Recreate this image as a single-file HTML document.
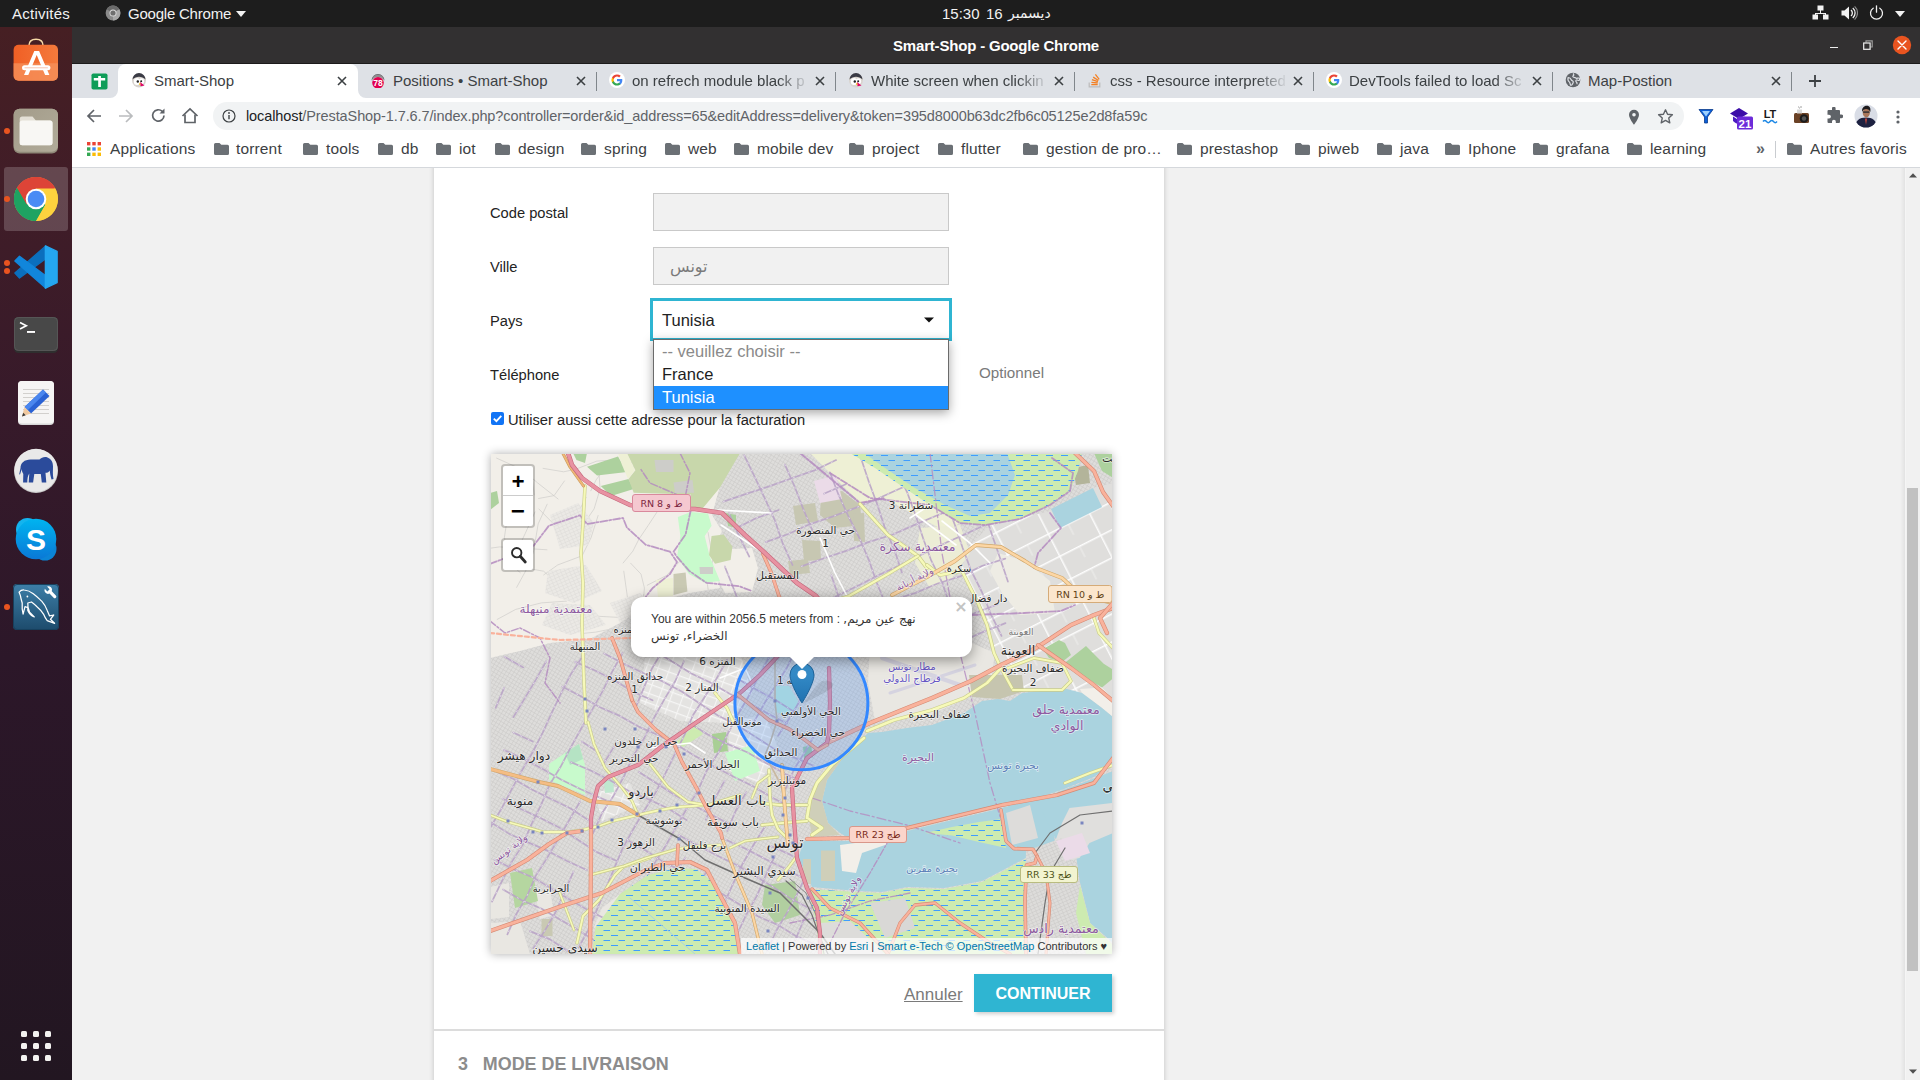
<!DOCTYPE html>
<html lang="fr">
<head>
<meta charset="utf-8">
<title>Smart-Shop - Google Chrome</title>
<style>
*{box-sizing:border-box;margin:0;padding:0}
html,body{width:1920px;height:1080px;overflow:hidden;background:#f1f1f1}
body{position:relative;font-family:"Liberation Sans","DejaVu Sans",sans-serif;color:#232323;-webkit-font-smoothing:antialiased}
.abs{position:absolute}
.ar{font-family:"DejaVu Sans","Liberation Sans",sans-serif}
/* GNOME top bar */
#topbar{position:absolute;left:0;top:0;width:1920px;height:27px;background:#1d1d1d;color:#f2f2f2;font-size:15px}
#topbar span{position:absolute;top:0;line-height:27px;white-space:nowrap}
/* dock */
#dock{position:absolute;left:0;top:27px;width:72px;height:1053px;background:linear-gradient(180deg,#461f23 0%,#411d27 14%,#371a2a 36%,#2c1729 60%,#221621 100%)}
/* chrome window */
#titlebar{position:absolute;left:72px;top:27px;width:1848px;height:37px;background:#323031;border-bottom:1px solid #1c1b1b;color:#fff;font-weight:bold;font-size:15px}
#tabstrip{position:absolute;left:72px;top:64px;width:1848px;height:34px;background:#dee1e6}
#toolbar{position:absolute;left:72px;top:98px;width:1848px;height:37px;background:#fff}
#bookmarks{position:absolute;left:72px;top:135px;width:1848px;height:33px;background:#fff;border-bottom:1px solid #d5d8dc}
.tab{position:absolute;top:0;height:33px;width:240px;font-size:15px;color:#3c4043}
.tab .t{position:absolute;left:36px;top:0;line-height:33px;white-space:nowrap;overflow:hidden;width:178px}
.tab .x{position:absolute;left:217px;top:10px;width:14px;height:14px}
.tab .fav{position:absolute;left:13px;top:8px;width:16px;height:16px}
.tsep{position:absolute;top:8px;width:1px;height:19px;background:#80868b}
.bm{position:absolute;top:0;line-height:28px;font-size:15.500px;letter-spacing:.15px;color:#3c4043;white-space:nowrap}
.bf{position:absolute;top:8px;width:15px;height:12px}
/* page */
#page{position:absolute;left:72px;top:168px;width:1833px;height:912px;background:#f1f1f1;overflow:hidden}
#card{position:absolute;left:362px;top:-10px;width:730px;height:940px;background:#fff;box-shadow:0 0 5px rgba(0,0,0,.2)}
.lbl{position:absolute;left:490px;font-size:14.700px;color:#232323;white-space:nowrap;line-height:20px}
.inp{position:absolute;left:653px;width:296px;height:38px;background:#f1f1f1;border:1px solid #c9c9c9}
</style>
</head>
<body>
<div id="topbar">
  <span style="left:12px;letter-spacing:.25px">Activités</span>
  <svg class="abs" style="left:105px;top:5px" width="16" height="16" viewBox="0 0 16 16"><circle cx="8" cy="8" r="7.400" fill="#8a8a8a"/><path d="M8 8 L1.600 4.300 A7.400 7.400 0 0 1 14.400 4.300 Z" fill="#6a6a6a"/><path d="M8 8 L14.400 4.300 A7.400 7.400 0 0 1 8 15.400 Z" fill="#a8a8a8"/><circle cx="8" cy="8" r="3.500" fill="#dcdcdc"/><circle cx="8" cy="8" r="2.600" fill="#6f6f6f"/></svg>
  <span style="left:128px;letter-spacing:-.22px">Google Chrome</span>
  <svg class="abs" style="left:236px;top:11px" width="10" height="6" viewBox="0 0 10 6"><path d="M0 0h10L5 6z" fill="#f2f2f2"/></svg>
  <span style="left:942px">15:30</span>
  <span style="left:986px">16</span>
  <span class="ar" style="left:1008px;font-size:14px">ديسمبر</span>
  <!-- network -->
  <svg class="abs" style="left:1812px;top:5px" width="17" height="16" viewBox="0 0 17 16" fill="#f2f2f2"><rect x="5.5" y="0.5" width="6" height="5"/><rect x="0.5" y="9.5" width="5.5" height="5"/><rect x="11" y="9.5" width="5.5" height="5"/><path d="M8 5h1v3h5v2h-1V9H4v1H3V8h5z"/></svg>
  <!-- volume -->
  <svg class="abs" style="left:1841px;top:5px" width="17" height="16" viewBox="0 0 17 16"><path d="M0.5 5.5h3L8 1.5v13L3.5 10.5h-3z" fill="#f2f2f2"/><path d="M10 5a4 4 0 0 1 0 6M11.8 3a6.6 6.6 0 0 1 0 10" stroke="#f2f2f2" stroke-width="1.3" fill="none"/><path d="M13.6 1.4a9 9 0 0 1 0 13.2" stroke="#8a8a8a" stroke-width="1.2" fill="none"/></svg>
  <!-- power -->
  <svg class="abs" style="left:1868px;top:5px" width="17" height="16" viewBox="0 0 17 16"><path d="M5.2 3.2a6 6 0 1 0 6.6 0" stroke="#f2f2f2" stroke-width="1.3" fill="none" stroke-linecap="round"/><path d="M8.5 0.8v6.4" stroke="#f2f2f2" stroke-width="1.3" stroke-linecap="round"/></svg>
  <svg class="abs" style="left:1895px;top:11px" width="10" height="6" viewBox="0 0 10 6"><path d="M0 0h10L5 6z" fill="#f2f2f2"/></svg>
</div>
<div id="dock">
  <!-- coordinates inside dock: y = screenY-27 -->
  <!-- running dots -->
  <!-- App store -->
  <svg class="abs" style="left:12px;top:8px" width="48" height="50" viewBox="0 0 48 50">
    <defs><linearGradient id="gA" x1="0" y1="0" x2="1" y2="0"><stop offset="0" stop-color="#f05f25"/><stop offset="1" stop-color="#f47a3c"/></linearGradient></defs>
    <path d="M17 12V10.500c0-4 2.700-6.300 7-6.300s7 2.300 7 6.300V12" stroke="#f5d9a6" stroke-width="1.500" fill="none"/>
    <rect x="1.600" y="9.800" width="44.400" height="36" rx="5" fill="url(#gA)"/>
    <path d="M1.600 28.300H46V40.800a5 5 0 0 1-5 5H6.600a5 5 0 0 1-5-5z" fill="#f6915c" opacity=".75"/>
    <path d="M12 40 L22.300 16h4.800L37.400 40h-4.300L24.700 20 16.300 40z" fill="#fff"/>
    <rect x="10" y="30.300" width="28.400" height="5" rx="2.500" fill="#fff"/>
    <path d="M12.500 32.800h23.400" stroke="#f7c0a8" stroke-width=".9"/>
  </svg>
  <!-- Files -->
  <svg class="abs" style="left:12px;top:80px" width="48" height="48" viewBox="0 0 48 48">
    <defs><linearGradient id="gF" x1="0" y1="0" x2="1" y2="1"><stop offset="0" stop-color="#a39c8a"/><stop offset="1" stop-color="#b1ab99"/></linearGradient></defs>
    <rect x="1.600" y="1.700" width="44.400" height="44.800" rx="6" fill="#8f8978"/>
    <rect x="1.600" y="1.700" width="44.400" height="43" rx="6" fill="url(#gF)"/>
    <path d="M7.700 12a2.500 2.500 0 0 1 2.500-2.500h10.300l3.400 4H38a2.500 2.500 0 0 1 2.500 2.500V35.800a2.500 2.500 0 0 1-2.500 2.500H10.200a2.500 2.500 0 0 1-2.500-2.500z" fill="#e4e0d6"/>
    <path d="M7.700 15.900a2.500 2.500 0 0 1 2.500-2.500H38a2.500 2.500 0 0 1 2.500 2.500V35.800a2.500 2.500 0 0 1-2.500 2.500H10.200a2.500 2.500 0 0 1-2.500-2.500z" fill="#f8f7f4"/>
  </svg>
  <!-- Chrome highlight + icon -->
  <div class="abs" style="left:4px;top:140px;width:64px;height:64px;border-radius:3px;background:rgba(255,255,255,.19)"></div>
  <svg class="abs" style="left:13px;top:149px" width="46" height="46" viewBox="0 0 46 46">
    <circle cx="23" cy="23" r="22" fill="#fdd23e"/>
    <path d="M23 23 L3.950 12 A22 22 0 0 1 42.050 12 Z" fill="#dd4437"/>
    <path d="M23 23 L3.950 12 A22 22 0 0 0 23 45 L32.500 28.500 Z" fill="#1ea362"/>
    <path d="M23 12.500 H42.300 A22 22 0 0 0 3.950 12 L13.500 28.500 Z" fill="#dd4437"/>
    <path d="M13.500 28.500 L3.950 12 A22 22 0 0 0 23 45 L32.200 28.900 Z" fill="#1ea362"/>
    <path d="M32.300 28.700 L23 45 A22 22 0 0 0 42.200 12.500 H23 Z" fill="#fdd23e"/>
    <circle cx="23" cy="23" r="10.300" fill="#fff"/>
    <circle cx="23" cy="23" r="8.300" fill="#4a8bf5"/>
  </svg>
  <!-- VS Code -->
  <svg class="abs" style="left:13px;top:217px" width="46" height="46" viewBox="0 0 46 46">
    <path d="M1.900 29.100 L6.500 34 L32.700 14.600 L32.700 1.900 Z" fill="#0b6fbd" stroke="#0b6fbd" stroke-width="1.400" stroke-linejoin="round"/>
    <path d="M6.500 12.200 L1.900 16.900 L32.700 44.100 L32.700 31.700 Z" fill="#1186db" stroke="#1186db" stroke-width="1.400" stroke-linejoin="round"/>
    <path d="M32.400 1.900 L44.100 7.400 V38.600 L32.400 44.100 Z" fill="#25a7f0" stroke="#25a7f0" stroke-width="1.400" stroke-linejoin="round"/>
  </svg>
  <!-- Terminal -->
  <svg class="abs" style="left:12px;top:288px" width="48" height="40" viewBox="0 0 48 40">
    <rect x="2" y="2" width="44" height="36" rx="4.500" fill="#2f2f2f"/>
    <rect x="2" y="2" width="44" height="34" rx="4.500" fill="#484848"/>
    <rect x="2.500" y="2.500" width="43" height="33" rx="4" fill="none" stroke="#5a5a5a" stroke-width=".8"/>
    <path d="M8 7.500l6.300 3.300L8 14.100" stroke="#fff" stroke-width="1.700" fill="none"/>
    <rect x="15" y="16" width="8" height="1.900" fill="#fff"/>
  </svg>
  <!-- Text editor -->
  <svg class="abs" style="left:16px;top:352px" width="40" height="48" viewBox="0 0 40 48">
    <rect x="2" y="2" width="36" height="44" rx="4" fill="#d8d8d8"/>
    <rect x="2" y="2" width="36" height="42.500" rx="4" fill="#f6f5f4"/>
    <g stroke="#d2d0cd" stroke-width="1"><path d="M7 10.500h26M7 14.500h26M7 18.500h26M7 22.500h26M7 26.500h26M7 30.500h26M7 34.500h26"/></g>
    <path d="M27 10.500 L33.500 17 L15 34.500 L8.500 28 Z" fill="#2a62d4"/>
    <path d="M27 10.500 L30 13.500 L11.700 31.200 L8.500 28 Z" fill="#4a86ee"/>
    <path d="M8.500 28 L15 34.500 L6 37.500 Z" fill="#f0c9a0"/>
    <path d="M6 37.500 L7.200 33.800 L9.700 36.300 Z" fill="#3a3a3a"/>
  </svg>
  <!-- Elephant (PostgreSQL-like, round) -->
  <svg class="abs" style="left:13px;top:421px" width="46" height="46" viewBox="0 0 46 46">
    <circle cx="23" cy="23" r="22" fill="#c9c9c9"/>
    <circle cx="23" cy="22.300" r="21.500" fill="#e9e9e9"/>
    <path d="M7.500 20c0-5 4-8.500 10-8.500h9c2-2 5-3 8-2 4 1.500 5.500 5 5.500 9 0 4-.5 8 .5 12.500l-2 .5c-1-3-1.500-6-1.800-9-.8 1.500-2.500 2.500-4.200 2.300l.8 9.700h-4.500l-1-8.500h-6.500l-1.200 8.500h-4.400l.6-9c-1.500 2-2 5-2 9h-4.200l.2-8.500c-1-1.500-1.500-3-1.500-5l-1.800 5.500-.8-.3z" fill="#2b4b9b"/>
  </svg>
  <!-- Skype -->
  <svg class="abs" style="left:13px;top:489px" width="46" height="46" viewBox="0 0 46 46">
    <defs><linearGradient id="gS" x1="0" y1="0" x2="0" y2="1"><stop offset="0" stop-color="#00b4f0"/><stop offset="1" stop-color="#0a78d6"/></linearGradient></defs>
    <circle cx="14.500" cy="13.500" r="11.500" fill="#14b4ee"/>
    <circle cx="32" cy="33" r="11.500" fill="#0b84d6"/>
    <circle cx="23" cy="23" r="20.300" fill="url(#gS)"/>
    <text x="23" y="33.800" font-family="Liberation Sans, sans-serif" font-weight="bold" font-size="30" fill="#fff" text-anchor="middle">S</text>
  </svg>
  <!-- MySQL workbench -->
  <svg class="abs" style="left:11px;top:555px" width="50" height="50" viewBox="0 0 50 50">
    <defs><linearGradient id="gM" x1="0" y1="0" x2="0" y2="1"><stop offset="0" stop-color="#3d7fa8"/><stop offset="1" stop-color="#1d4b6c"/></linearGradient></defs>
    <rect x="2" y="2" width="46" height="46" rx="4" fill="url(#gM)"/>
    <rect x="2.500" y="2.500" width="45" height="45" rx="3.500" fill="none" stroke="#17405d" stroke-width="1"/>
    <path d="M8.100 10.200C9.500 8.600 11.500 7.800 13.100 8c3.500 0.300 6.500 1.600 9.200 3.700 3.400 2.600 6 5.200 8.400 7.400 2.400 2.700 4.300 5.800 5.500 9.300l2.400 5.500 4.100-.9-3.300 4.300 4.200 4-7.400-2.700c-1.500-1.800-2.700-4-3.700-6.500-1.800-2.800-4-5.300-6.500-7.400-1.700-1.600-3.500-3.200-5.500-4.700l-3.700 1c-.3 3.200.4 6.300 1.800 9.200l4.700 4.700c-3-1-5.200-3.200-6.500-6.300v-3l-2.800-.9-1.900 7.400c-.9-3.500-1.200-7.200-.9-11.100C10.600 18.700 9.800 16.200 9.400 13.600z" fill="none" stroke="#fff" stroke-width="1.250" stroke-linejoin="round"/>
    <circle cx="16.400" cy="14.500" r=".9" fill="#fff"/>
    <g transform="translate(39.500 10.300) rotate(-45)"><path d="M-1.600 -6.500a3.600 3.600 0 0 0 0 6.700V6a1.600 1.600 0 0 0 3.200 0V.2a3.600 3.600 0 0 0 0-6.700v3.700h-3.200z" fill="#fff"/></g>
  </svg>
  <!-- apps grid -->
  <svg class="abs" style="left:20px;top:1003px" width="32" height="32" viewBox="0 0 32 32" fill="#f3f2f0">
    <rect x="1" y="1" width="6" height="6" rx="1.500"/><rect x="13" y="1" width="6" height="6" rx="1.500"/><rect x="25" y="1" width="6" height="6" rx="1.500"/>
    <rect x="1" y="13" width="6" height="6" rx="1.500"/><rect x="13" y="13" width="6" height="6" rx="1.500"/><rect x="25" y="13" width="6" height="6" rx="1.500"/>
    <rect x="1" y="25" width="6" height="6" rx="1.500"/><rect x="13" y="25" width="6" height="6" rx="1.500"/><rect x="25" y="25" width="6" height="6" rx="1.500"/>
  </svg>
  <div class="abs" style="left:4px;top:101px;width:6px;height:6px;border-radius:3px;background:#e95420"></div>
  <div class="abs" style="left:4px;top:169px;width:6px;height:6px;border-radius:3px;background:#e95420"></div>
  <div class="abs" style="left:4px;top:232.500px;width:6px;height:6px;border-radius:3px;background:#e95420"></div>
  <div class="abs" style="left:4px;top:241.300px;width:6px;height:6px;border-radius:3px;background:#e95420"></div>
  <div class="abs" style="left:4px;top:577px;width:6px;height:6px;border-radius:3px;background:#e95420"></div>
</div>
<div id="titlebar">
<span class="abs" style="left:0;top:0;width:1848px;text-align:center;line-height:37px;white-space:nowrap;letter-spacing:-.19px">Smart-Shop - Google Chrome</span>
<div class="abs" style="left:1758px;top:19.500px;width:8px;height:1.500px;background:#ededed"></div>
<svg class="abs" style="left:1791px;top:13px" width="10" height="10" viewBox="0 0 10 10" fill="none" stroke-width="1.200"><path d="M3 2.500V.8h6.200V7H7.500" stroke="#9a9a9a"/><rect x=".7" y="3" width="6.400" height="6.300" stroke="#f0f0f0"/></svg>
<svg class="abs" style="left:1820px;top:8px" width="20" height="20" viewBox="0 0 20 20"><circle cx="10" cy="10" r="9.200" fill="#e95420"/><path d="M6 6l8 8M14 6l-8 8" stroke="#fff" stroke-width="1.400" stroke-linecap="round"/></svg>
</div>
<div id="tabstrip">
<svg class="abs" style="left:18.500px;top:8.500px" width="17" height="17" viewBox="0 0 17 17"><rect x=".5" y=".5" width="16" height="16" rx="1.800" fill="#0f9d58"/><path d="M7.200 3h2.700v11H7.200z M2.800 5h11.400v2.600H2.800z" fill="#fff"/></svg>
<div class="abs" style="left:46px;top:0;width:240px;height:34px;background:#fff;border-radius:8px 8px 0 0"></div>
<svg class="abs" style="left:38px;top:26px" width="8" height="8" viewBox="0 0 8 8"><path d="M8 0v8H0a8 8 0 0 0 8-8z" fill="#fff"/></svg>
<svg class="abs" style="left:286px;top:26px" width="8" height="8" viewBox="0 0 8 8"><path d="M0 0v8h8a8 8 0 0 1-8-8z" fill="#fff"/></svg>
<div class="tab" style="left:46px"><svg class="fav" viewBox="0 0 16 16"><circle cx="8" cy="8.500" r="7" fill="#d9d4cf"/><path d="M1.500 7.500a6.500 6.500 0 0 1 13 0c-2-2-4-2.800-6.500-2.800S3.500 5.500 1.500 7.500z" fill="#3a3b45"/><ellipse cx="6" cy="9.500" rx="3.200" ry="3.600" fill="#fff"/><ellipse cx="10.500" cy="9.300" rx="2.600" ry="3" fill="#fff"/><circle cx="6.800" cy="9.500" r="1.200" fill="#222"/><circle cx="10.200" cy="9.300" r="1" fill="#222"/><path d="M9 10l4.500 3.500-4 .8z" fill="#df0067"/><path d="M8.500 10.500l1.500 2-2 .5z" fill="#f9c21b"/></svg><span class="t">Smart-Shop</span><svg class="x" viewBox="0 0 14 14"><path d="M3 3l8 8M11 3l-8 8" stroke="#3c4043" stroke-width="1.600"/></svg></div>
<div class="tab" style="left:285px"><svg class="fav" viewBox="0 0 16 16"><path d="M1.500 8.500a6.500 6.500 0 0 1 13 0c-2-2.500-4-3.500-6.500-3.500S3.500 6 1.500 8.500z" fill="#55555c"/><circle cx="8" cy="8.500" r="6" fill="#c9c5c1" opacity=".5"/><circle cx="8" cy="10.800" r="5.800" fill="#e2004f"/><text x="8" y="14" font-size="8.500" font-weight="bold" fill="#fff" text-anchor="middle" font-family="Liberation Sans, sans-serif">78</text></svg><span class="t">Positions • Smart-Shop</span><svg class="x" viewBox="0 0 14 14"><path d="M3 3l8 8M11 3l-8 8" stroke="#3c4043" stroke-width="1.600"/></svg></div>
<div class="tab" style="left:524px"><svg class="fav" viewBox="0 0 16 16"><circle cx="8" cy="8" r="8" fill="#fff"/><path d="M13.300 8.150c0-.4-.04-.8-.1-1.150H8v2.200h3a2.600 2.600 0 0 1-1.100 1.700v1.400h1.800c1.050-.97 1.600-2.400 1.600-4.150z" fill="#4285f4"/><path d="M8 13.600c1.500 0 2.750-.5 3.700-1.350l-1.800-1.400c-.5.330-1.130.53-1.900.53-1.450 0-2.700-.98-3.130-2.300H3v1.450A5.600 5.600 0 0 0 8 13.600z" fill="#34a853"/><path d="M4.870 9.080a3.360 3.360 0 0 1 0-2.160V5.470H3a5.600 5.600 0 0 0 0 5.060z" fill="#fbbc05"/><path d="M8 4.620c.82 0 1.550.28 2.130.83l1.600-1.600A5.400 5.400 0 0 0 8 2.400a5.600 5.600 0 0 0-5 3.070l1.870 1.450C5.300 5.600 6.550 4.620 8 4.620z" fill="#ea4335"/></svg><span class="t" style="-webkit-mask-image:linear-gradient(90deg,#000 82%,transparent 100%);mask-image:linear-gradient(90deg,#000 82%,transparent 100%)">on refrech module black p</span><svg class="x" viewBox="0 0 14 14"><path d="M3 3l8 8M11 3l-8 8" stroke="#3c4043" stroke-width="1.600"/></svg></div>
<div class="tab" style="left:763px"><svg class="fav" viewBox="0 0 16 16"><circle cx="8" cy="8.500" r="7" fill="#d9d4cf"/><path d="M1.500 7.500a6.500 6.500 0 0 1 13 0c-2-2-4-2.800-6.500-2.800S3.500 5.500 1.500 7.500z" fill="#3a3b45"/><ellipse cx="6" cy="9.500" rx="3.200" ry="3.600" fill="#fff"/><ellipse cx="10.500" cy="9.300" rx="2.600" ry="3" fill="#fff"/><circle cx="6.800" cy="9.500" r="1.200" fill="#222"/><circle cx="10.200" cy="9.300" r="1" fill="#222"/><path d="M9 10l4.500 3.500-4 .8z" fill="#df0067"/><path d="M8.500 10.500l1.500 2-2 .5z" fill="#f9c21b"/></svg><span class="t" style="-webkit-mask-image:linear-gradient(90deg,#000 82%,transparent 100%);mask-image:linear-gradient(90deg,#000 82%,transparent 100%)">White screen when clickin</span><svg class="x" viewBox="0 0 14 14"><path d="M3 3l8 8M11 3l-8 8" stroke="#3c4043" stroke-width="1.600"/></svg></div>
<div class="tab" style="left:1002px"><svg class="fav" viewBox="0 0 16 16"><path d="M2.200 10.500v4.300h10.600v-4.300" fill="none" stroke="#bcbbbb" stroke-width="1.200"/><path d="M4.300 12.700h6.400M4.400 10.300l6.300.7M4.900 7.700l6 1.900M6.200 5.100l5.200 3.400M8.400 2.400l3.800 5" stroke="#f48024" stroke-width="1.300"/></svg><span class="t" style="-webkit-mask-image:linear-gradient(90deg,#000 82%,transparent 100%);mask-image:linear-gradient(90deg,#000 82%,transparent 100%)">css - Resource interpreted</span><svg class="x" viewBox="0 0 14 14"><path d="M3 3l8 8M11 3l-8 8" stroke="#3c4043" stroke-width="1.600"/></svg></div>
<div class="tab" style="left:1241px"><svg class="fav" viewBox="0 0 16 16"><circle cx="8" cy="8" r="8" fill="#fff"/><path d="M13.300 8.150c0-.4-.04-.8-.1-1.150H8v2.200h3a2.600 2.600 0 0 1-1.100 1.700v1.400h1.800c1.050-.97 1.600-2.400 1.600-4.150z" fill="#4285f4"/><path d="M8 13.600c1.500 0 2.750-.5 3.700-1.350l-1.800-1.400c-.5.330-1.130.53-1.900.53-1.450 0-2.700-.98-3.130-2.300H3v1.450A5.600 5.600 0 0 0 8 13.600z" fill="#34a853"/><path d="M4.870 9.080a3.360 3.360 0 0 1 0-2.160V5.470H3a5.600 5.600 0 0 0 0 5.060z" fill="#fbbc05"/><path d="M8 4.620c.82 0 1.550.28 2.130.83l1.600-1.600A5.400 5.400 0 0 0 8 2.400a5.600 5.600 0 0 0-5 3.070l1.870 1.450C5.300 5.600 6.550 4.620 8 4.620z" fill="#ea4335"/></svg><span class="t" style="-webkit-mask-image:linear-gradient(90deg,#000 82%,transparent 100%);mask-image:linear-gradient(90deg,#000 82%,transparent 100%)">DevTools failed to load Sc</span><svg class="x" viewBox="0 0 14 14"><path d="M3 3l8 8M11 3l-8 8" stroke="#3c4043" stroke-width="1.600"/></svg></div>
<div class="tab" style="left:1480px"><svg class="fav" viewBox="0 0 16 16"><circle cx="8" cy="8" r="7.300" fill="#5f6368"/><path d="M3.200 5.500c1.500.2 2.500 1 3 2.200.4 1 1.500 1 2 1.800.5.900-.3 2-1 3-.6.900-1.500 1-1.800.2-.4-1-.3-2-1.200-2.800C3 8.800 2.500 7.500 3.200 5.500zM8 1.500c1 .8 1 1.800.2 2.300-.8.600-.2 1.500.8 1.500 1.200 0 1.500 1 2.600 1 .9 0 1.500-.6 2.600-.2.500 1 .4 2.300-.2 2.400-1 .2-1.600-.9-2.600-.5-1 .4-.6 1.600.2 2.200.6.500.6 1.300.2 2" fill="none" stroke="#dee1e6" stroke-width="1.200"/></svg><span class="t">Map-Postion</span><svg class="x" viewBox="0 0 14 14"><path d="M3 3l8 8M11 3l-8 8" stroke="#3c4043" stroke-width="1.600"/></svg></div>
<div class="tsep" style="left:524px"></div>
<div class="tsep" style="left:763px"></div>
<div class="tsep" style="left:1002px"></div>
<div class="tsep" style="left:1241px"></div>
<div class="tsep" style="left:1480px"></div>
<div class="tsep" style="left:1719px"></div>
<svg class="abs" style="left:1736px;top:10px" width="14" height="14" viewBox="0 0 14 14"><path d="M7 1v12M1 7h12" stroke="#3c4043" stroke-width="1.800"/></svg>
</div>
<div id="toolbar">
<svg class="abs" style="left:14px;top:10px" width="16" height="16" viewBox="0 0 16 16" fill="none" stroke="#5f6368" stroke-width="1.700"><path d="M15 8H2.500M8 2L2 8l6 6"/></svg>
<svg class="abs" style="left:46px;top:10px" width="16" height="16" viewBox="0 0 16 16" fill="none" stroke="#babcbe" stroke-width="1.700"><path d="M1 8h12.500M8 2l6 6-6 6"/></svg>
<svg class="abs" style="left:78px;top:9px" width="17" height="17" viewBox="0 0 17 17" fill="none" stroke="#5f6368" stroke-width="1.700"><path d="M14 8.500A5.700 5.700 0 1 1 12.300 4.400"/><path d="M14.500 1.500v5h-5z" fill="#5f6368" stroke="none"/></svg>
<svg class="abs" style="left:109px;top:9px" width="18" height="17" viewBox="0 0 18 17" fill="none" stroke="#5f6368" stroke-width="1.700"><path d="M1.500 9L9 2l7.500 7"/><path d="M4 7.500V15.500h10V7.500"/></svg>
<div class="abs" style="left:141px;top:4px;width:1471px;height:28px;border-radius:14px;background:#f1f3f4"></div>
<svg class="abs" style="left:150px;top:11px" width="14" height="14" viewBox="0 0 14 14"><circle cx="7" cy="7" r="6" fill="none" stroke="#3c4043" stroke-width="1.200"/><path d="M7 6v4.200" stroke="#3c4043" stroke-width="1.400"/><circle cx="7" cy="4" r=".9" fill="#3c4043"/></svg>
<span class="abs" style="left:174px;top:4px;line-height:28px;font-size:14.500px;color:#5f6368;white-space:nowrap;letter-spacing:-.1px"><span style="color:#202124">localhost</span>/PrestaShop-1.7.6.7/index.php?controller=order&amp;id_address=65&amp;editAddress=delivery&amp;token=395d8000b63dc2fb6c05125e2d8fa59c</span>
<svg class="abs" style="left:1556px;top:10.5px" width="12" height="17" viewBox="0 0 12 17"><path d="M6 .8A5 5 0 0 0 1 5.800C1 9.500 6 15.800 6 15.800s5-6.300 5-10A5 5 0 0 0 6 .8z" fill="#5f6368"/><circle cx="6" cy="5.800" r="1.800" fill="#f1f3f4"/></svg>
<svg class="abs" style="left:1585px;top:10px" width="17" height="17" viewBox="0 0 17 17"><path d="M8.500 1.800l2.050 4.500 4.850.5-3.650 3.250 1.050 4.800L8.500 12.350 4.200 14.850l1.050-4.800L1.600 6.800l4.850-.5z" fill="none" stroke="#5f6368" stroke-width="1.400" stroke-linejoin="round"/></svg>
<svg class="abs" style="left:1625px;top:9px" width="18" height="18" viewBox="0 0 18 18"><path d="M2 2.500h14L10.500 10v6h-3v-6z" fill="#0b5fd8"/><path d="M5 4h8L9 9.500z" fill="#9cd0ff"/><path d="M2 2.500h14L10.500 10v6h-3v-6z" fill="none" stroke="#0a3a8a" stroke-width=".8"/></svg>
<svg class="abs" style="left:1657px;top:7px" width="26" height="26" viewBox="0 0 26 26"><path d="M1 8.500L10 3l9 5.500-9 5.500z" fill="#3c0ea8"/><path d="M4 11.500v4.500c2 2 4 3 6 3s4-1 6-3v-4.500l-6 3.700z" fill="#4a1bc2"/><rect x="8" y="11.500" width="16" height="13" rx="1.500" fill="#6c2bd9"/><text x="16" y="22.500" font-size="11.500" font-weight="bold" fill="#fff" text-anchor="middle" font-family="Liberation Sans, sans-serif">21</text></svg>
<svg class="abs" style="left:1688px;top:8px" width="20" height="20" viewBox="0 0 20 20"><text x="10" y="11.500" font-size="11" font-weight="bold" fill="#1b1b1b" text-anchor="middle" font-family="Liberation Sans, sans-serif">LT</text><path d="M3 15.500c1.200-1.500 2.300-1.500 3.500 0s2.300 1.500 3.500 0 2.300-1.500 3.500 0 2.300 1.500 3.500 0" fill="none" stroke="#1e88e5" stroke-width="1.500"/></svg>
<svg class="abs" style="left:1719px;top:8px" width="22" height="20" viewBox="0 0 22 20"><rect x="3" y="7" width="15" height="10" rx="1.500" fill="#6b4226"/><rect x="6" y="3.500" width="5" height="4" fill="#d8d8d8"/><circle cx="13" cy="12.500" r="4.300" fill="#1c1c1c"/><circle cx="13" cy="12.500" r="2.200" fill="#555"/><path d="M7.500 .5l1 2M10 0v2" stroke="#888" stroke-width=".8"/></svg>
<svg class="abs" style="left:1753px;top:9px" width="18" height="18" viewBox="0 0 18 18"><path d="M7 1.500a1.800 1.800 0 0 1 3.600 0V3H14a1 1 0 0 1 1 1v3.400h1.300a1.900 1.900 0 0 1 0 3.800H15V15a1 1 0 0 1-1 1h-3.200v-1.400a1.900 1.900 0 0 0-3.800 0V16H3.500a1 1 0 0 1-1-1v-3.500H4a1.900 1.900 0 0 0 0-3.800H2.500V4a1 1 0 0 1 1-1H7z" fill="#5f6368"/></svg>
<svg class="abs" style="left:1782px;top:6px" width="24" height="24" viewBox="0 0 24 24"><defs><clipPath id="av"><circle cx="12" cy="12" r="11.500"/></clipPath></defs><circle cx="12" cy="12" r="11.500" fill="#d9dde6"/><g clip-path="url(#av)"><path d="M1 24c0-7.500 4.500-10.500 11-10.500s11 3 11 10.500z" fill="#1d2140"/><path d="M10.800 14.500l1.200 6.500 1.200-6.500z" fill="#b5443c"/><ellipse cx="12.300" cy="8.800" rx="3.600" ry="4.600" fill="#a9765a"/><path d="M8 8c-.3-4 1.800-6.300 4.800-6.300S17 4 16.300 8c-.8-2-2.300-3-4.200-3S8.800 6 8 8z" fill="#1c1a1d"/><rect x="9" y="7.300" width="6.500" height="1.600" rx=".6" fill="#2a2a30" opacity=".8"/></g></svg>
<svg class="abs" style="left:1824px;top:11.5px" width="4" height="14" viewBox="0 0 4 14" fill="#5f6368"><circle cx="2" cy="2" r="1.600"/><circle cx="2" cy="7" r="1.600"/><circle cx="2" cy="12" r="1.600"/></svg>
</div>
<div id="bookmarks">
<svg class="abs" style="left:15px;top:7px" width="14" height="14" viewBox="0 0 14 14"><g><rect x="0" y="0" width="3.400" height="3.400" fill="#ea4335"/><rect x="5.300" y="0" width="3.400" height="3.400" fill="#ea4335"/><rect x="10.600" y="0" width="3.400" height="3.400" fill="#ea4335"/><rect x="0" y="5.300" width="3.400" height="3.400" fill="#34a853"/><rect x="5.300" y="5.300" width="3.400" height="3.400" fill="#4285f4"/><rect x="10.600" y="5.300" width="3.400" height="3.400" fill="#fbbc05"/><rect x="0" y="10.600" width="3.400" height="3.400" fill="#34a853"/><rect x="5.300" y="10.600" width="3.400" height="3.400" fill="#fbbc05"/><rect x="10.600" y="10.600" width="3.400" height="3.400" fill="#fbbc05"/></g></svg>
<span class="bm" style="left:38px">Applications</span>
<svg class="bf" style="left:142px" viewBox="0 0 15 12"><path d="M0 1.500A1.500 1.500 0 0 1 1.500 0H5.500l1.800 1.800H13.500A1.500 1.500 0 0 1 15 3.300v7.200a1.500 1.500 0 0 1-1.500 1.500h-12A1.500 1.500 0 0 1 0 10.500z" fill="#6b7075"/></svg>
<span class="bm" style="left:164px">torrent</span>
<svg class="bf" style="left:231px" viewBox="0 0 15 12"><path d="M0 1.500A1.500 1.500 0 0 1 1.500 0H5.500l1.800 1.800H13.500A1.500 1.500 0 0 1 15 3.300v7.200a1.500 1.500 0 0 1-1.500 1.500h-12A1.500 1.500 0 0 1 0 10.500z" fill="#6b7075"/></svg>
<span class="bm" style="left:254px">tools</span>
<svg class="bf" style="left:306px" viewBox="0 0 15 12"><path d="M0 1.500A1.500 1.500 0 0 1 1.500 0H5.500l1.800 1.800H13.500A1.500 1.500 0 0 1 15 3.300v7.200a1.500 1.500 0 0 1-1.500 1.500h-12A1.500 1.500 0 0 1 0 10.500z" fill="#6b7075"/></svg>
<span class="bm" style="left:329px">db</span>
<svg class="bf" style="left:364px" viewBox="0 0 15 12"><path d="M0 1.500A1.500 1.500 0 0 1 1.500 0H5.500l1.800 1.800H13.500A1.500 1.500 0 0 1 15 3.300v7.200a1.500 1.500 0 0 1-1.500 1.500h-12A1.500 1.500 0 0 1 0 10.500z" fill="#6b7075"/></svg>
<span class="bm" style="left:387px">iot</span>
<svg class="bf" style="left:423px" viewBox="0 0 15 12"><path d="M0 1.500A1.500 1.500 0 0 1 1.500 0H5.500l1.800 1.800H13.500A1.500 1.500 0 0 1 15 3.300v7.200a1.500 1.500 0 0 1-1.500 1.500h-12A1.500 1.500 0 0 1 0 10.500z" fill="#6b7075"/></svg>
<span class="bm" style="left:446px">design</span>
<svg class="bf" style="left:509px" viewBox="0 0 15 12"><path d="M0 1.500A1.500 1.500 0 0 1 1.500 0H5.500l1.800 1.800H13.500A1.500 1.500 0 0 1 15 3.300v7.200a1.500 1.500 0 0 1-1.500 1.500h-12A1.500 1.500 0 0 1 0 10.500z" fill="#6b7075"/></svg>
<span class="bm" style="left:532px">spring</span>
<svg class="bf" style="left:593px" viewBox="0 0 15 12"><path d="M0 1.500A1.500 1.500 0 0 1 1.500 0H5.500l1.800 1.800H13.500A1.500 1.500 0 0 1 15 3.300v7.200a1.500 1.500 0 0 1-1.500 1.500h-12A1.500 1.500 0 0 1 0 10.500z" fill="#6b7075"/></svg>
<span class="bm" style="left:616px">web</span>
<svg class="bf" style="left:662px" viewBox="0 0 15 12"><path d="M0 1.500A1.500 1.500 0 0 1 1.500 0H5.500l1.800 1.800H13.500A1.500 1.500 0 0 1 15 3.300v7.200a1.500 1.500 0 0 1-1.500 1.500h-12A1.500 1.500 0 0 1 0 10.500z" fill="#6b7075"/></svg>
<span class="bm" style="left:685px">mobile dev</span>
<svg class="bf" style="left:777px" viewBox="0 0 15 12"><path d="M0 1.500A1.500 1.500 0 0 1 1.500 0H5.500l1.800 1.800H13.500A1.500 1.500 0 0 1 15 3.300v7.200a1.500 1.500 0 0 1-1.500 1.500h-12A1.500 1.500 0 0 1 0 10.500z" fill="#6b7075"/></svg>
<span class="bm" style="left:800px">project</span>
<svg class="bf" style="left:866px" viewBox="0 0 15 12"><path d="M0 1.500A1.500 1.500 0 0 1 1.500 0H5.500l1.800 1.800H13.500A1.500 1.500 0 0 1 15 3.300v7.200a1.500 1.500 0 0 1-1.500 1.500h-12A1.500 1.500 0 0 1 0 10.500z" fill="#6b7075"/></svg>
<span class="bm" style="left:889px">flutter</span>
<svg class="bf" style="left:951px" viewBox="0 0 15 12"><path d="M0 1.500A1.500 1.500 0 0 1 1.500 0H5.500l1.800 1.800H13.500A1.500 1.500 0 0 1 15 3.300v7.200a1.500 1.500 0 0 1-1.500 1.500h-12A1.500 1.500 0 0 1 0 10.500z" fill="#6b7075"/></svg>
<span class="bm" style="left:974px">gestion de pro…</span>
<svg class="bf" style="left:1105px" viewBox="0 0 15 12"><path d="M0 1.500A1.500 1.500 0 0 1 1.500 0H5.500l1.800 1.800H13.500A1.500 1.500 0 0 1 15 3.300v7.200a1.500 1.500 0 0 1-1.500 1.500h-12A1.500 1.500 0 0 1 0 10.500z" fill="#6b7075"/></svg>
<span class="bm" style="left:1128px">prestashop</span>
<svg class="bf" style="left:1223px" viewBox="0 0 15 12"><path d="M0 1.500A1.500 1.500 0 0 1 1.500 0H5.500l1.800 1.800H13.500A1.500 1.500 0 0 1 15 3.300v7.200a1.500 1.500 0 0 1-1.500 1.500h-12A1.500 1.500 0 0 1 0 10.500z" fill="#6b7075"/></svg>
<span class="bm" style="left:1246px">piweb</span>
<svg class="bf" style="left:1305px" viewBox="0 0 15 12"><path d="M0 1.500A1.500 1.500 0 0 1 1.500 0H5.500l1.800 1.800H13.500A1.500 1.500 0 0 1 15 3.300v7.200a1.500 1.500 0 0 1-1.500 1.500h-12A1.500 1.500 0 0 1 0 10.500z" fill="#6b7075"/></svg>
<span class="bm" style="left:1328px">java</span>
<svg class="bf" style="left:1373px" viewBox="0 0 15 12"><path d="M0 1.500A1.500 1.500 0 0 1 1.500 0H5.500l1.800 1.800H13.500A1.500 1.500 0 0 1 15 3.300v7.200a1.500 1.500 0 0 1-1.500 1.500h-12A1.500 1.500 0 0 1 0 10.500z" fill="#6b7075"/></svg>
<span class="bm" style="left:1396px">Iphone</span>
<svg class="bf" style="left:1461px" viewBox="0 0 15 12"><path d="M0 1.500A1.500 1.500 0 0 1 1.500 0H5.500l1.800 1.800H13.500A1.500 1.500 0 0 1 15 3.300v7.200a1.500 1.500 0 0 1-1.500 1.500h-12A1.500 1.500 0 0 1 0 10.500z" fill="#6b7075"/></svg>
<span class="bm" style="left:1484px">grafana</span>
<svg class="bf" style="left:1555px" viewBox="0 0 15 12"><path d="M0 1.500A1.500 1.500 0 0 1 1.500 0H5.500l1.800 1.800H13.500A1.500 1.500 0 0 1 15 3.300v7.200a1.500 1.500 0 0 1-1.500 1.500h-12A1.500 1.500 0 0 1 0 10.500z" fill="#6b7075"/></svg>
<span class="bm" style="left:1578px">learning</span>
<svg class="bf" style="left:1715px" viewBox="0 0 15 12"><path d="M0 1.500A1.500 1.500 0 0 1 1.500 0H5.500l1.800 1.800H13.500A1.500 1.500 0 0 1 15 3.300v7.200a1.500 1.500 0 0 1-1.500 1.500h-12A1.500 1.500 0 0 1 0 10.500z" fill="#6b7075"/></svg>
<span class="bm" style="left:1738px">Autres favoris</span>
<span class="bm" style="left:1684px;font-size:16px;font-weight:bold;color:#5f6368">»</span>
<div class="abs" style="left:1703px;top:6px;width:1px;height:17px;background:#c9ccd0"></div>
</div>
<div id="page">
<div id="card"></div>
</div>
<!-- form (absolute to screen) -->
<div class="lbl" style="top:203px">Code postal</div>
<div class="inp" style="top:193px"></div>
<div class="lbl" style="top:257px">Ville</div>
<div class="inp" style="top:247px"><span class="ar abs" style="left:16px;top:0;line-height:37px;font-size:16px;color:#7a7a7a" dir="rtl">تونس</span></div>
<div class="lbl" style="top:311px">Pays</div>
<div class="abs" style="left:650px;top:298px;width:302px;height:43px;border:3px solid #2fb5d2;background:#fff">
  <span class="abs" style="left:9px;top:.5px;line-height:37px;font-size:16.500px;color:#232323">Tunisia</span>
  <svg class="abs" style="left:271px;top:16px" width="10" height="6" viewBox="0 0 10 6"><path d="M0 .5h10L5 5.500z" fill="#111"/></svg>
</div>
<div class="lbl" style="top:365px">Téléphone</div>
<div class="abs" style="left:979px;top:363px;font-size:15.200px;line-height:20px;color:#7a7a7a">Optionnel</div>
<!-- dropdown -->
<div class="abs" style="left:653px;top:339px;width:296px;height:71px;background:#fff;border:1px solid #6b6b6b;box-shadow:0 3px 10px rgba(0,0,0,.35);font-size:16.500px">
  <div style="height:23px;line-height:23px;padding-left:8px;color:#8a8a8a">-- veuillez choisir --</div>
  <div style="height:23px;line-height:23px;padding-left:8px;color:#1d1d1d">France</div>
  <div style="height:23px;line-height:23px;padding-left:8px;color:#fff;background:#1e90ff">Tunisia</div>
</div>
<!-- checkbox -->
<svg class="abs" style="left:491px;top:412px" width="13" height="13" viewBox="0 0 13 13"><rect width="13" height="13" rx="2" fill="#1174f5"/><path d="M2.800 6.600l2.600 2.600 4.900-5.400" stroke="#fff" stroke-width="1.800" fill="none"/></svg>
<div class="lbl" style="left:508px;top:410px">Utiliser aussi cette adresse pour la facturation</div>
<!-- buttons -->
<div class="abs" style="left:904px;top:984px;font-size:17px;line-height:22px;color:#7a7a7a;text-decoration:underline">Annuler</div>
<div class="abs" style="left:974px;top:974px;width:138px;height:38px;background:#2fb5d2;box-shadow:2px 2px 4px rgba(0,0,0,.2);color:#fff;font-weight:bold;font-size:16px;line-height:39px;text-align:center">CONTINUER</div>
<div class="abs" style="left:434px;top:1029px;width:730px;height:2px;background:#dcdcdc"></div>
<div class="abs" style="left:458px;top:1052px;font-size:17.900px;line-height:24px;font-weight:bold;color:#8c8c8c;white-space:nowrap">3&nbsp;&nbsp;&nbsp;MODE DE LIVRAISON</div>
<!-- scrollbar -->
<div class="abs" style="left:1900px;top:168px;width:5px;height:912px;background:linear-gradient(90deg,rgba(0,0,0,0),rgba(0,0,0,.06))"></div>
<div class="abs" style="left:1905px;top:168px;width:15px;height:912px;background:#f1f1f1;border-left:1px solid #f5f5f5"></div>
<div class="abs" style="left:1907px;top:488px;width:11px;height:483px;background:#c1c1c1"></div>
<svg class="abs" style="left:1909px;top:173px" width="8" height="5" viewBox="0 0 8 5"><path d="M0 4.500h8L4 .3z" fill="#505050"/></svg>
<svg class="abs" style="left:1909px;top:1069px" width="8" height="5" viewBox="0 0 8 5"><path d="M0 .5h8L4 4.700z" fill="#505050"/></svg>
<div id="map" class="abs" style="left:491px;top:454px;width:621px;height:500px;overflow:hidden;background:#f2efe9;box-shadow:0 0 9px rgba(0,0,0,.32)">
<svg class="abs" style="left:-1px;top:-1px" width="623" height="501" viewBox="0 0 623 501" font-family="DejaVu Sans, Liberation Sans, sans-serif">
<defs>
<pattern id="wet" width="15" height="10" patternUnits="userSpaceOnUse"><path d="M1 2.500h7M8.500 7.500h6.500" stroke="#3f9dff" stroke-width="1"/></pattern>
<pattern id="fine" width="3.500" height="3.500" patternUnits="userSpaceOnUse" patternTransform="rotate(31)"><path d="M0 .4h3.500M.4 0v3.500" stroke="#bab9b7" stroke-width=".55"/></pattern>
<pattern id="fine2" width="4" height="3.200" patternUnits="userSpaceOnUse" patternTransform="rotate(-24)"><path d="M0 .4h4M.4 0v3.200" stroke="#bebdbb" stroke-width=".55"/></pattern>
<pattern id="coarse" width="46" height="25" patternUnits="userSpaceOnUse" patternTransform="rotate(-27)"><path d="M0 .8h46M.8 0v25" stroke="#ffffff" stroke-width="1.400"/><path d="M23 .8v12" stroke="#f4f4f2" stroke-width=".8"/></pattern>
<pattern id="whitenet" width="11" height="9" patternUnits="userSpaceOnUse" patternTransform="rotate(20)"><path d="M0 .6h11M.6 0v9" stroke="#ffffff" stroke-width="1.100"/></pattern>
<clipPath id="urb"><polygon points="240,0 623,0 623,501 0,501 0,205 30,198 60,190 100,186 130,170 160,150 200,140 230,135 222,100 232,78 222,62 228,40"/></clipPath>
</defs>
<rect width="623" height="501" fill="#f2efe9"/>
<polyline points="74.4815,27.9071 64.1,42.6 48.6,45.5" fill="none" stroke="#cfcdca" stroke-width="0.7" stroke-linejoin="round" stroke-linecap="round" />
<polyline points="96.1796,44.5227 88.7,58.2 69.9,75.2" fill="none" stroke="#cfcdca" stroke-width="0.7" stroke-linejoin="round" stroke-linecap="round" />
<polyline points="91.2365,180.607 105.8,179.1 130.9,174.1" fill="none" stroke="#cfcdca" stroke-width="0.7" stroke-linejoin="round" stroke-linecap="round" />
<polyline points="133.768,118.199 137,141.1 140.2,166.8 145.7,185 152.9,207.9" fill="none" stroke="#cfcdca" stroke-width="0.7" stroke-linejoin="round" stroke-linecap="round" />
<polyline points="18.8267,55.5461 14.4,84.2 18.3,109.3 30.3,119.7" fill="none" stroke="#cfcdca" stroke-width="0.7" stroke-linejoin="round" stroke-linecap="round" />
<polyline points="153.69,141.446 153,162.4 147.9,175 145,188.1" fill="none" stroke="#cfcdca" stroke-width="0.7" stroke-linejoin="round" stroke-linecap="round" />
<polyline points="168.167,57.2774 158.1,72.6 148.9,86.2 142.9,98.1 133.1,110" fill="none" stroke="#cfcdca" stroke-width="0.7" stroke-linejoin="round" stroke-linecap="round" />
<polyline points="89.9184,161.213 106.8,163.2 128.6,164.4 148.2,175.6" fill="none" stroke="#cfcdca" stroke-width="0.7" stroke-linejoin="round" stroke-linecap="round" />
<polyline points="53.0728,15.3522 73.6,18.8 85.5,16.3 106.8,8.1 128.1,6.8" fill="none" stroke="#cfcdca" stroke-width="0.7" stroke-linejoin="round" stroke-linecap="round" />
<polyline points="155.526,9.98869 136.5,9.2 115.2,14.7 106.1,26.9 100.8,37.8" fill="none" stroke="#cfcdca" stroke-width="0.7" stroke-linejoin="round" stroke-linecap="round" />
<polyline points="34.7909,18.7709 47.5,29.8 68.1,46" fill="none" stroke="#cfcdca" stroke-width="0.7" stroke-linejoin="round" stroke-linecap="round" />
<polyline points="109.055,21.3404 110.1,35.9 104.1,55.9 94.5,69.9" fill="none" stroke="#cfcdca" stroke-width="0.7" stroke-linejoin="round" stroke-linecap="round" />
<polyline points="218.965,66.9242 205.3,81.4 194.3,101" fill="none" stroke="#cfcdca" stroke-width="0.7" stroke-linejoin="round" stroke-linecap="round" />
<polyline points="208.899,65.8038 218.1,79.6 222.9,106.6 217.4,131.3 220,149.6" fill="none" stroke="#cfcdca" stroke-width="0.7" stroke-linejoin="round" stroke-linecap="round" />
<polyline points="6.66543,5.16836 26.6,14.1 42.6,28.2 44.2,41.9" fill="none" stroke="#cfcdca" stroke-width="0.7" stroke-linejoin="round" stroke-linecap="round" />
<polyline points="108.118,62.4814 101,84.8 92.1,102.8 67.8,111.9 53.7,121.9" fill="none" stroke="#cfcdca" stroke-width="0.7" stroke-linejoin="round" stroke-linecap="round" />
<polyline points="76.479,148.152 51.3,149.9 25.7,156.4 7.2,166.4" fill="none" stroke="#cfcdca" stroke-width="0.7" stroke-linejoin="round" stroke-linecap="round" />
<polyline points="140.662,110.236 151,121.1 154.4,134.9 152,164.2" fill="none" stroke="#cfcdca" stroke-width="0.7" stroke-linejoin="round" stroke-linecap="round" />
<polyline points="44.8053,161.673 60.9,158.1 78.5,151.8" fill="none" stroke="#cfcdca" stroke-width="0.7" stroke-linejoin="round" stroke-linecap="round" />
<polyline points="209.304,65.45 204.1,91.5 194.9,102.8 176.7,122.4 157.3,132.2" fill="none" stroke="#cfcdca" stroke-width="0.7" stroke-linejoin="round" stroke-linecap="round" />
<polyline points="32.5586,114.534 53.6,118.2 65.7,129" fill="none" stroke="#cfcdca" stroke-width="0.7" stroke-linejoin="round" stroke-linecap="round" />
<polyline points="57.1537,51.2297 48.2,70.8 43.4,99.3 37.3,114.9 26.7,134.3" fill="none" stroke="#cfcdca" stroke-width="0.7" stroke-linejoin="round" stroke-linecap="round" />
<polyline points="56.9608,96.7938 29.1,95 9.6,93.9 -14.1,97.2" fill="none" stroke="#cfcdca" stroke-width="0.7" stroke-linejoin="round" stroke-linecap="round" />
<polyline points="48.9187,56.0143 63.4,70.7 75.2,82.5" fill="none" stroke="#cfcdca" stroke-width="0.7" stroke-linejoin="round" stroke-linecap="round" />
<polyline points="171.737,17.4132 145.4,14.1 124.4,11.5" fill="none" stroke="#cfcdca" stroke-width="0.7" stroke-linejoin="round" stroke-linecap="round" />
<polyline points="45.0213,58.9272 35.2,80.5 27.6,96.7" fill="none" stroke="#cfcdca" stroke-width="0.7" stroke-linejoin="round" stroke-linecap="round" />
<polygon points="60,62 88,50 104,70 98,92 70,96" fill="#ebe9e5" />
<polygon points="60,62 88,50 104,70 98,92 70,96" fill="url(#fine2)" opacity=".3"/>
<polygon points="58,118 96,112 112,138 84,150 55,140" fill="#ebe9e5" />
<polygon points="58,118 96,112 112,138 84,150 55,140" fill="url(#fine2)" opacity=".3"/>
<polygon points="62,150 100,152 116,172 80,182 52,172" fill="#ebe9e5" />
<polygon points="62,150 100,152 116,172 80,182 52,172" fill="url(#fine2)" opacity=".3"/>
<polygon points="120,150 150,140 160,150 130,170" fill="#ebe9e5" />
<polygon points="120,150 150,140 160,150 130,170" fill="url(#fine2)" opacity=".3"/>
<polygon points="240,0 623,0 623,501 0,501 0,205 30,198 60,190 100,186 130,170 160,150 200,140 230,135 222,100 232,78 222,62 228,40" fill="#dedddb" />
<polygon points="240,0 623,0 623,501 0,501 0,205 30,198 60,190 100,186 130,170 160,150 200,140 230,135 222,100 232,78 222,62 228,40" fill="url(#fine)" opacity=".55"/>
<polygon points="155,205 250,200 262,240 238,270 190,268 150,250" fill="#e4e3e1" />
<polygon points="155,205 250,200 262,240 238,270 190,268 150,250" fill="url(#whitenet)" opacity=".65"/>
<polygon points="238,268 275,262 290,300 268,330 240,318" fill="#e4e3e1" />
<polygon points="238,268 275,262 290,300 268,330 240,318" fill="url(#whitenet)" opacity=".65"/>
<polygon points="105,340 140,330 150,352 112,368" fill="#e4e3e1" />
<polygon points="105,340 140,330 150,352 112,368" fill="url(#whitenet)" opacity=".65"/>
<polygon points="500,72 560,58 603,35 623,30 623,250 560,240 520,235 505,205 495,160 470,120 478,95" fill="#dfdedc" />
<polygon points="500,72 560,58 603,35 623,30 623,250 560,240 520,235 505,205 495,160 470,120 478,95" fill="url(#coarse)" opacity=".95"/>
<polygon points="320,0 373,0 405,25 440,50 470,70 455,78 425,62 395,45 370,50 345,25" fill="#eef0d5" />
<polygon points="430,75 470,72 480,100 462,125 440,135 425,110" fill="#ecedd6" />
<polygon points="508,100 535,108 560,128 565,160 530,162 512,140 500,118" fill="#eeece4" />
<polygon points="380,190 470,185 505,200 500,235 440,262 385,268 378,230" fill="#e9e7e2" />
<polyline points="392,205 470,232" fill="none" stroke="#d5d3e0" stroke-width="4" stroke-linejoin="round" stroke-linecap="round" />
<polyline points="400,240 485,212" fill="none" stroke="#d5d3e0" stroke-width="3" stroke-linejoin="round" stroke-linecap="round" />
<polygon points="222,97 262,95 268,115 262,139 235,140 225,120" fill="#f2efe9" />
<polygon points="83,0 97,0 95,10 86.5,7" fill="#add19e" />
<polygon points="97,13.8 128,3.5 136.8,19 107,22.5" fill="#add19e" />
<polygon points="110.8,33 138.5,26 143.7,36 121,43" fill="#add19e" />
<polygon points="128,0 137,0 145,17 138,26 132,12" fill="#eef0d5" />
<polygon points="137,0 250,0 230,34.6 213,55 200.8,57 200.8,41.5 143.7,39.8 138.5,26 145.4,17.3" fill="#c8d7ab" />
<polygon points="164.5,7 183.5,7 183.5,19 166,19" fill="#cdcdc9" />
<polygon points="183.5,29.4 202.5,27 204,39.8 185,40" fill="#cdcdc9" />
<polygon points="187.8,64 200.8,58.9 218,60.6 221.6,72.7 214.7,83 219.9,103.9 230,128 214.7,129.8 199,121 187,103.9 190.4,83" fill="#c8facc" />
<polygon points="221.6,83 233.7,81.4 242.4,93.5 240.6,107 225,110.8 219,102" fill="#c8d7ab" />
<polygon points="209.5,114 223,114 223,121 210,121" fill="#cdcdc9" />
<polygon points="183.5,121 195.6,119.5 197.4,138.5 183.5,142" fill="#c9c9b3" />
<polygon points="166,127 183,125 183,143 168,144" fill="#eef0d5" />
<polygon points="0,40 7,38 9,50 0,57" fill="#add19e" />
<polygon points="236,60 246,62 246,75 238,73" fill="#add19e" />
<polygon points="331,42 352,38 370,52 372,72 345,75 330,62" fill="#c7c7b2" />
<polygon points="303,53 325,50 328,68 306,72" fill="#c7c7b2" />
<polygon points="312,87 330,88 331,107 314,108" fill="#c7c7b2" />
<polygon points="363,61 374,60 375,89 364,88" fill="#c7c7b2" />
<polygon points="298,108 318,106 320,120 300,122" fill="#c7c7b2" />
<polygon points="324,28 346,22 352,46 330,50" fill="#ebdbe8" />
<polygon points="0,434 19,430 19,464 0,466" fill="#e9e7e2" />
<polygon points="0,470 30,468 40,501 0,501" fill="#e9e7e2" />
<polygon points="45,440 60,436 64,462 50,466" fill="#e9e7e2" />
<polygon points="104,474 112,455 130,441 122,458 108,480" fill="#e9e7e2" />
<polygon points="51.5,466 62.5,466 62.5,483 51.5,483" fill="#c9c9b3" />
<polygon points="59,311 75,300 89,291 95,312 95,342 66,330 59,327" fill="#c8facc" />
<polygon points="75,300 89,291 93,306 80,312" fill="#b5e3c4" />
<polygon points="114,328 123,327 124,339 115,340" fill="#bfe8cf" />
<polygon points="186,289 206,272 213,281 193,294" fill="#cdebb0" />
<polygon points="222,281 236,279 238,298 224,300" fill="#a9cf95" />
<polygon points="235,300 262,292 270,318 245,328" fill="#c8facc" />
<polygon points="20,420 42,415 48,448 25,455" fill="#b5d6a0" />
<polygon points="275,432 305,428 310,462 285,470 272,452" fill="#b1cfa0" />
<polygon points="553,196 569,187 575,190 581,202 572,209 559,205" fill="#add19e" />
<polygon points="573.7,210.7 596,193 613.7,210.7 623,216.6 623,225.5 612,234.4 587,219.6" fill="#add19e" />
<polygon points="590,236 612,234.4 623,246 623,264 612,255 592,240" fill="#f2efe9" />
<polygon points="479,222 532,222 534,238 510,246 482,244" fill="#c6c5af" />
<polygon points="604,0 623,0 623,25 612,18" fill="#add19e" />
<polygon points="583,15 598,12 600,30 586,32" fill="#b3b49a" />
<polygon points="286,233 299,233 308,248 306,257 293,261 285,259" fill="#bfe8dc" />
<polygon points="313,294 321,292 323,304 314,306" fill="#9fc9a8" />
<g clip-path="url(#urb)">
<polyline points="287.7,196.1 307.6,204.7" fill="none" stroke="#b9a4c6" stroke-width="1.7" stroke-linejoin="round" stroke-linecap="round" opacity=".9"/>
<polyline points="247.5,225.7 266.2,236.5 285.2,246.7 303.5,258.4" fill="none" stroke="#b9a4c6" stroke-width="1.7" stroke-linejoin="round" stroke-linecap="round" opacity=".9"/>
<polyline points="164.4,197.8 182.9,209.1 201.3,220.5 220.9,229.7 239.5,240.8 259.1,249.9 277.8,260.6 297,270.6" fill="none" stroke="#b9a4c6" stroke-width="1.7" stroke-linejoin="round" stroke-linecap="round" opacity=".9"/>
<polyline points="114.1,200.4 133.3,210.4 152.7,219.8 172.7,228.4 191.7,238.5 209.8,250.5 227.9,262.5 247.2,272.2 265.5,283.9 283.7,295.6 303.6,304.2 323.5,312.8" fill="none" stroke="#b9a4c6" stroke-width="1.7" stroke-linejoin="round" stroke-linecap="round" opacity=".9"/>
<polyline points="85.1,208.9 105.1,217.5 124.4,227.2 142.7,238.7 162.6,247.3" fill="none" stroke="#b9a4c6" stroke-width="1.7" stroke-linejoin="round" stroke-linecap="round" opacity=".9"/>
<polyline points="199.4,270.1 217.8,281.5 237.3,290.9 257.2,299.3 276,310.1 294.8,320.7 314.6,329.6" fill="none" stroke="#b9a4c6" stroke-width="1.7" stroke-linejoin="round" stroke-linecap="round" opacity=".9"/>
<polyline points="14.5,203.7 33.3,214.4" fill="none" stroke="#b9a4c6" stroke-width="1.7" stroke-linejoin="round" stroke-linecap="round" opacity=".9"/>
<polyline points="72.1,233.4 91.2,243.4 110,254.2 129.8,262.9 148.6,273.6 168.5,282.2 187.6,292.3 206,303.6 225,313.9 244.2,323.9 263.6,333.4 282.1,344.5 301.3,354.4" fill="none" stroke="#b9a4c6" stroke-width="1.7" stroke-linejoin="round" stroke-linecap="round" opacity=".9"/>
<polyline points="91.8,288.5 109.9,300.4" fill="none" stroke="#b9a4c6" stroke-width="1.7" stroke-linejoin="round" stroke-linecap="round" opacity=".9"/>
<polyline points="148.9,319 167.1,330.8 185.4,342.5 204.4,352.7 223.5,362.8 242.7,372.7" fill="none" stroke="#b9a4c6" stroke-width="1.7" stroke-linejoin="round" stroke-linecap="round" opacity=".9"/>
<polyline points="280.8,393 300.6,401.9 318.7,413.8" fill="none" stroke="#b9a4c6" stroke-width="1.7" stroke-linejoin="round" stroke-linecap="round" opacity=".9"/>
<polyline points="23.2,279.4 42.8,288.6" fill="none" stroke="#b9a4c6" stroke-width="1.7" stroke-linejoin="round" stroke-linecap="round" opacity=".9"/>
<polyline points="80.8,309.1 100.8,317.5 120,327.3 138.8,338 158.8,346.5 178.4,355.5 196.7,367.1" fill="none" stroke="#b9a4c6" stroke-width="1.7" stroke-linejoin="round" stroke-linecap="round" opacity=".9"/>
<polyline points="235.4,386.4 255,395.5 274.2,405.4 293.6,415 312.7,425.1" fill="none" stroke="#b9a4c6" stroke-width="1.7" stroke-linejoin="round" stroke-linecap="round" opacity=".9"/>
<polyline points="13.9,296.9 33.6,305.9 52.7,315.9 71.4,326.8 90.8,336.2 110.7,345 130.6,353.5 150.3,362.4" fill="none" stroke="#b9a4c6" stroke-width="1.7" stroke-linejoin="round" stroke-linecap="round" opacity=".9"/>
<polyline points="188.7,382.1 207.8,392.4 226.9,402.4 246.3,411.8 265,422.8 283.4,434.2 301.5,446.1 320.7,456.1" fill="none" stroke="#b9a4c6" stroke-width="1.7" stroke-linejoin="round" stroke-linecap="round" opacity=".9"/>
<polyline points="3,317.3 23,325.8 41.8,336.4 61.2,346 80.6,355.5 98.7,367.4" fill="none" stroke="#b9a4c6" stroke-width="1.7" stroke-linejoin="round" stroke-linecap="round" opacity=".9"/>
<polyline points="137.3,386.9 156,397.7 174.2,409.4 193.7,418.8 212.3,429.8 231.2,440.3 249.7,451.5 267.9,463.3 287.8,471.9 306.2,483.2 326.1,491.9" fill="none" stroke="#b9a4c6" stroke-width="1.7" stroke-linejoin="round" stroke-linecap="round" opacity=".9"/>
<polyline points="12.5,345.6 31.3,356.2 51,365.2 70.2,375.1 88.3,387 106.4,398.9 126.2,407.8" fill="none" stroke="#b9a4c6" stroke-width="1.7" stroke-linejoin="round" stroke-linecap="round" opacity=".9"/>
<polyline points="165.1,426.6 183.4,438.2 203,447.4 222,457.6" fill="none" stroke="#b9a4c6" stroke-width="1.7" stroke-linejoin="round" stroke-linecap="round" opacity=".9"/>
<polyline points="0,369 18.5,380.4 38.1,389.4 58,397.9 77.1,408.1 96.8,417.1" fill="none" stroke="#b9a4c6" stroke-width="1.7" stroke-linejoin="round" stroke-linecap="round" opacity=".9"/>
<polyline points="152.9,449.5 173,457.8 191.8,468.4 210.4,479.4 229.8,489 249.8,497.4" fill="none" stroke="#b9a4c6" stroke-width="1.7" stroke-linejoin="round" stroke-linecap="round" opacity=".9"/>
<polyline points="4.5,406.6 23.7,416.4 43.7,424.8 62.3,435.9 80.8,447.2 99.5,457.9 118.8,467.6 138.1,477.4 156.3,489.2 175.5,499.1" fill="none" stroke="#b9a4c6" stroke-width="1.7" stroke-linejoin="round" stroke-linecap="round" opacity=".9"/>
<polyline points="13,436.5 31.8,447.2 51.7,455.8 70.4,466.7 89.1,477.6 107.4,489.2 126.2,499.8" fill="none" stroke="#b9a4c6" stroke-width="1.7" stroke-linejoin="round" stroke-linecap="round" opacity=".9"/>
<polyline points="39.9,478.1 59.9,486.4 78.1,498.3" fill="none" stroke="#b9a4c6" stroke-width="1.7" stroke-linejoin="round" stroke-linecap="round" opacity=".9"/>
<polyline points="14.1,234.8 5.6,254.8" fill="none" stroke="#b9a4c6" stroke-width="1.7" stroke-linejoin="round" stroke-linecap="round" opacity=".9"/>
<polyline points="56.2,208.3 45.6,227.1 34.5,245.7 23.3,264.2" fill="none" stroke="#b9a4c6" stroke-width="1.7" stroke-linejoin="round" stroke-linecap="round" opacity=".9"/>
<polyline points="92.6,203.2 80.8,221.4 70.9,240.6 61.6,260.1 52.6,279.8 42.8,299 31.8,317.7 21.5,336.6 11.4,355.8 0.5,374.4" fill="none" stroke="#b9a4c6" stroke-width="1.7" stroke-linejoin="round" stroke-linecap="round" opacity=".9"/>
<polyline points="132.5,200 122.1,218.9 112.5,238.3 101.9,257.1 91,275.8 80.6,294.7 70.6,313.8 59.3,332.3 50.9,352.3 41.3,371.6 32.8,391.6 21.2,409.9 11.4,429.2 2,448.6" fill="none" stroke="#b9a4c6" stroke-width="1.7" stroke-linejoin="round" stroke-linecap="round" opacity=".9"/>
<polyline points="172.9,197 161.9,215.6 153.5,235.6 145.1,255.6" fill="none" stroke="#b9a4c6" stroke-width="1.7" stroke-linejoin="round" stroke-linecap="round" opacity=".9"/>
<polyline points="124.2,293.4 112.9,311.9" fill="none" stroke="#b9a4c6" stroke-width="1.7" stroke-linejoin="round" stroke-linecap="round" opacity=".9"/>
<polyline points="90.1,348.6 79.2,367.3 68.3,386 57.3,404.6 45.7,422.9 37.1,442.8 26.2,461.4 17.4,481.3" fill="none" stroke="#b9a4c6" stroke-width="1.7" stroke-linejoin="round" stroke-linecap="round" opacity=".9"/>
<polyline points="194,208.2 185.3,228 174.2,246.6 163.7,265.5 154.3,285 142.9,303.4 134.1,323.1 123.9,342.2 111.9,360.3 103.1,380.1" fill="none" stroke="#b9a4c6" stroke-width="1.7" stroke-linejoin="round" stroke-linecap="round" opacity=".9"/>
<polyline points="83.5,418.6 74.8,438.4 66.1,458.2 55.3,476.9 43.3,495.1" fill="none" stroke="#b9a4c6" stroke-width="1.7" stroke-linejoin="round" stroke-linecap="round" opacity=".9"/>
<polyline points="237.2,206.7 226.6,225.5 214.8,243.7 203.1,262 194.5,281.9 184.8,301.2 175.3,320.6 165.5,339.8 153.9,358.1 143,376.8 132.5,395.7 124.1,415.7 115.7,435.7 107.4,455.7 98.9,475.7 88.7,494.7" fill="none" stroke="#b9a4c6" stroke-width="1.7" stroke-linejoin="round" stroke-linecap="round" opacity=".9"/>
<polyline points="279.1,204.5 268.5,223.3 258.9,242.7 248.1,261.4 237.9,280.5 228.2,299.8 216.5,318 207.9,337.9 196.4,356.3 185.6,375 175,393.8 163.3,412.1 153.4,431.3" fill="none" stroke="#b9a4c6" stroke-width="1.7" stroke-linejoin="round" stroke-linecap="round" opacity=".9"/>
<polyline points="134.1,469.9 124.1,489.1" fill="none" stroke="#b9a4c6" stroke-width="1.7" stroke-linejoin="round" stroke-linecap="round" opacity=".9"/>
<polyline points="306.8,194.8 297.2,214.2 285.7,232.5 274.1,250.8 263.7,269.7" fill="none" stroke="#b9a4c6" stroke-width="1.7" stroke-linejoin="round" stroke-linecap="round" opacity=".9"/>
<polyline points="234.6,327.6 224.4,346.7 215.8,366.6" fill="none" stroke="#b9a4c6" stroke-width="1.7" stroke-linejoin="round" stroke-linecap="round" opacity=".9"/>
<polyline points="195.3,404.6 183.9,423 174.1,442.3 164.9,461.8 153.5,480.2 142.6,498.9" fill="none" stroke="#b9a4c6" stroke-width="1.7" stroke-linejoin="round" stroke-linecap="round" opacity=".9"/>
<polyline points="321.7,227.2 311,245.9 299.9,264.5 288.1,282.7" fill="none" stroke="#b9a4c6" stroke-width="1.7" stroke-linejoin="round" stroke-linecap="round" opacity=".9"/>
<polyline points="256.3,339.2 245.6,358 237.2,378" fill="none" stroke="#b9a4c6" stroke-width="1.7" stroke-linejoin="round" stroke-linecap="round" opacity=".9"/>
<polyline points="217.8,416.5 206.5,435 196.4,454.1 184.8,472.4 173.5,490.9" fill="none" stroke="#b9a4c6" stroke-width="1.7" stroke-linejoin="round" stroke-linecap="round" opacity=".9"/>
<polyline points="326.3,278.6 315.9,297.5 304.3,315.8 295.7,335.7" fill="none" stroke="#b9a4c6" stroke-width="1.7" stroke-linejoin="round" stroke-linecap="round" opacity=".9"/>
<polyline points="275,373.6 263.5,392 252.7,410.7 243.3,430.1 234.5,449.9 223.2,468.4 211.4,486.5" fill="none" stroke="#b9a4c6" stroke-width="1.7" stroke-linejoin="round" stroke-linecap="round" opacity=".9"/>
<polyline points="284.8,403.2 275.5,422.8 267,442.7 256.3,461.5 247.1,481.1" fill="none" stroke="#b9a4c6" stroke-width="1.7" stroke-linejoin="round" stroke-linecap="round" opacity=".9"/>
<polyline points="316.9,420.3 307.8,439.9 297.5,458.9 286.5,477.5 277.3,497.1" fill="none" stroke="#b9a4c6" stroke-width="1.7" stroke-linejoin="round" stroke-linecap="round" opacity=".9"/>
<polyline points="325,449.1 313.5,467.5 305.1,487.5" fill="none" stroke="#b9a4c6" stroke-width="1.7" stroke-linejoin="round" stroke-linecap="round" opacity=".9"/>
<polyline points="287.7,196.1 307.6,204.7" fill="none" stroke="#ffffff" stroke-width="0.9" stroke-linejoin="round" stroke-linecap="round" stroke-dasharray="1.2 7" opacity=".6"/>
<polyline points="247.5,225.7 266.2,236.5 285.2,246.7 303.5,258.4" fill="none" stroke="#ffffff" stroke-width="0.9" stroke-linejoin="round" stroke-linecap="round" stroke-dasharray="1.2 7" opacity=".6"/>
<polyline points="164.4,197.8 182.9,209.1 201.3,220.5 220.9,229.7 239.5,240.8 259.1,249.9 277.8,260.6 297,270.6" fill="none" stroke="#ffffff" stroke-width="0.9" stroke-linejoin="round" stroke-linecap="round" stroke-dasharray="1.2 7" opacity=".6"/>
<polyline points="114.1,200.4 133.3,210.4 152.7,219.8 172.7,228.4 191.7,238.5 209.8,250.5 227.9,262.5 247.2,272.2 265.5,283.9 283.7,295.6 303.6,304.2 323.5,312.8" fill="none" stroke="#ffffff" stroke-width="0.9" stroke-linejoin="round" stroke-linecap="round" stroke-dasharray="1.2 7" opacity=".6"/>
<polyline points="85.1,208.9 105.1,217.5 124.4,227.2 142.7,238.7 162.6,247.3" fill="none" stroke="#ffffff" stroke-width="0.9" stroke-linejoin="round" stroke-linecap="round" stroke-dasharray="1.2 7" opacity=".6"/>
<polyline points="199.4,270.1 217.8,281.5 237.3,290.9 257.2,299.3 276,310.1 294.8,320.7 314.6,329.6" fill="none" stroke="#ffffff" stroke-width="0.9" stroke-linejoin="round" stroke-linecap="round" stroke-dasharray="1.2 7" opacity=".6"/>
<polyline points="14.5,203.7 33.3,214.4" fill="none" stroke="#ffffff" stroke-width="0.9" stroke-linejoin="round" stroke-linecap="round" stroke-dasharray="1.2 7" opacity=".6"/>
<polyline points="72.1,233.4 91.2,243.4 110,254.2 129.8,262.9 148.6,273.6 168.5,282.2 187.6,292.3 206,303.6 225,313.9 244.2,323.9 263.6,333.4 282.1,344.5 301.3,354.4" fill="none" stroke="#ffffff" stroke-width="0.9" stroke-linejoin="round" stroke-linecap="round" stroke-dasharray="1.2 7" opacity=".6"/>
<polyline points="91.8,288.5 109.9,300.4" fill="none" stroke="#ffffff" stroke-width="0.9" stroke-linejoin="round" stroke-linecap="round" stroke-dasharray="1.2 7" opacity=".6"/>
<polyline points="148.9,319 167.1,330.8 185.4,342.5 204.4,352.7 223.5,362.8 242.7,372.7" fill="none" stroke="#ffffff" stroke-width="0.9" stroke-linejoin="round" stroke-linecap="round" stroke-dasharray="1.2 7" opacity=".6"/>
<polyline points="280.8,393 300.6,401.9 318.7,413.8" fill="none" stroke="#ffffff" stroke-width="0.9" stroke-linejoin="round" stroke-linecap="round" stroke-dasharray="1.2 7" opacity=".6"/>
<polyline points="23.2,279.4 42.8,288.6" fill="none" stroke="#ffffff" stroke-width="0.9" stroke-linejoin="round" stroke-linecap="round" stroke-dasharray="1.2 7" opacity=".6"/>
<polyline points="80.8,309.1 100.8,317.5 120,327.3 138.8,338 158.8,346.5 178.4,355.5 196.7,367.1" fill="none" stroke="#ffffff" stroke-width="0.9" stroke-linejoin="round" stroke-linecap="round" stroke-dasharray="1.2 7" opacity=".6"/>
<polyline points="235.4,386.4 255,395.5 274.2,405.4 293.6,415 312.7,425.1" fill="none" stroke="#ffffff" stroke-width="0.9" stroke-linejoin="round" stroke-linecap="round" stroke-dasharray="1.2 7" opacity=".6"/>
<polyline points="13.9,296.9 33.6,305.9 52.7,315.9 71.4,326.8 90.8,336.2 110.7,345 130.6,353.5 150.3,362.4" fill="none" stroke="#ffffff" stroke-width="0.9" stroke-linejoin="round" stroke-linecap="round" stroke-dasharray="1.2 7" opacity=".6"/>
<polyline points="188.7,382.1 207.8,392.4 226.9,402.4 246.3,411.8 265,422.8 283.4,434.2 301.5,446.1 320.7,456.1" fill="none" stroke="#ffffff" stroke-width="0.9" stroke-linejoin="round" stroke-linecap="round" stroke-dasharray="1.2 7" opacity=".6"/>
<polyline points="3,317.3 23,325.8 41.8,336.4 61.2,346 80.6,355.5 98.7,367.4" fill="none" stroke="#ffffff" stroke-width="0.9" stroke-linejoin="round" stroke-linecap="round" stroke-dasharray="1.2 7" opacity=".6"/>
<polyline points="137.3,386.9 156,397.7 174.2,409.4 193.7,418.8 212.3,429.8 231.2,440.3 249.7,451.5 267.9,463.3 287.8,471.9 306.2,483.2 326.1,491.9" fill="none" stroke="#ffffff" stroke-width="0.9" stroke-linejoin="round" stroke-linecap="round" stroke-dasharray="1.2 7" opacity=".6"/>
<polyline points="12.5,345.6 31.3,356.2 51,365.2 70.2,375.1 88.3,387 106.4,398.9 126.2,407.8" fill="none" stroke="#ffffff" stroke-width="0.9" stroke-linejoin="round" stroke-linecap="round" stroke-dasharray="1.2 7" opacity=".6"/>
<polyline points="165.1,426.6 183.4,438.2 203,447.4 222,457.6" fill="none" stroke="#ffffff" stroke-width="0.9" stroke-linejoin="round" stroke-linecap="round" stroke-dasharray="1.2 7" opacity=".6"/>
<polyline points="0,369 18.5,380.4 38.1,389.4 58,397.9 77.1,408.1 96.8,417.1" fill="none" stroke="#ffffff" stroke-width="0.9" stroke-linejoin="round" stroke-linecap="round" stroke-dasharray="1.2 7" opacity=".6"/>
<polyline points="152.9,449.5 173,457.8 191.8,468.4 210.4,479.4 229.8,489 249.8,497.4" fill="none" stroke="#ffffff" stroke-width="0.9" stroke-linejoin="round" stroke-linecap="round" stroke-dasharray="1.2 7" opacity=".6"/>
<polyline points="4.5,406.6 23.7,416.4 43.7,424.8 62.3,435.9 80.8,447.2 99.5,457.9 118.8,467.6 138.1,477.4 156.3,489.2 175.5,499.1" fill="none" stroke="#ffffff" stroke-width="0.9" stroke-linejoin="round" stroke-linecap="round" stroke-dasharray="1.2 7" opacity=".6"/>
<polyline points="13,436.5 31.8,447.2 51.7,455.8 70.4,466.7 89.1,477.6 107.4,489.2 126.2,499.8" fill="none" stroke="#ffffff" stroke-width="0.9" stroke-linejoin="round" stroke-linecap="round" stroke-dasharray="1.2 7" opacity=".6"/>
<polyline points="39.9,478.1 59.9,486.4 78.1,498.3" fill="none" stroke="#ffffff" stroke-width="0.9" stroke-linejoin="round" stroke-linecap="round" stroke-dasharray="1.2 7" opacity=".6"/>
<polyline points="14.1,234.8 5.6,254.8" fill="none" stroke="#ffffff" stroke-width="0.9" stroke-linejoin="round" stroke-linecap="round" stroke-dasharray="1.2 7" opacity=".6"/>
<polyline points="56.2,208.3 45.6,227.1 34.5,245.7 23.3,264.2" fill="none" stroke="#ffffff" stroke-width="0.9" stroke-linejoin="round" stroke-linecap="round" stroke-dasharray="1.2 7" opacity=".6"/>
<polyline points="92.6,203.2 80.8,221.4 70.9,240.6 61.6,260.1 52.6,279.8 42.8,299 31.8,317.7 21.5,336.6 11.4,355.8 0.5,374.4" fill="none" stroke="#ffffff" stroke-width="0.9" stroke-linejoin="round" stroke-linecap="round" stroke-dasharray="1.2 7" opacity=".6"/>
<polyline points="132.5,200 122.1,218.9 112.5,238.3 101.9,257.1 91,275.8 80.6,294.7 70.6,313.8 59.3,332.3 50.9,352.3 41.3,371.6 32.8,391.6 21.2,409.9 11.4,429.2 2,448.6" fill="none" stroke="#ffffff" stroke-width="0.9" stroke-linejoin="round" stroke-linecap="round" stroke-dasharray="1.2 7" opacity=".6"/>
<polyline points="172.9,197 161.9,215.6 153.5,235.6 145.1,255.6" fill="none" stroke="#ffffff" stroke-width="0.9" stroke-linejoin="round" stroke-linecap="round" stroke-dasharray="1.2 7" opacity=".6"/>
<polyline points="124.2,293.4 112.9,311.9" fill="none" stroke="#ffffff" stroke-width="0.9" stroke-linejoin="round" stroke-linecap="round" stroke-dasharray="1.2 7" opacity=".6"/>
<polyline points="90.1,348.6 79.2,367.3 68.3,386 57.3,404.6 45.7,422.9 37.1,442.8 26.2,461.4 17.4,481.3" fill="none" stroke="#ffffff" stroke-width="0.9" stroke-linejoin="round" stroke-linecap="round" stroke-dasharray="1.2 7" opacity=".6"/>
<polyline points="194,208.2 185.3,228 174.2,246.6 163.7,265.5 154.3,285 142.9,303.4 134.1,323.1 123.9,342.2 111.9,360.3 103.1,380.1" fill="none" stroke="#ffffff" stroke-width="0.9" stroke-linejoin="round" stroke-linecap="round" stroke-dasharray="1.2 7" opacity=".6"/>
<polyline points="83.5,418.6 74.8,438.4 66.1,458.2 55.3,476.9 43.3,495.1" fill="none" stroke="#ffffff" stroke-width="0.9" stroke-linejoin="round" stroke-linecap="round" stroke-dasharray="1.2 7" opacity=".6"/>
<polyline points="237.2,206.7 226.6,225.5 214.8,243.7 203.1,262 194.5,281.9 184.8,301.2 175.3,320.6 165.5,339.8 153.9,358.1 143,376.8 132.5,395.7 124.1,415.7 115.7,435.7 107.4,455.7 98.9,475.7 88.7,494.7" fill="none" stroke="#ffffff" stroke-width="0.9" stroke-linejoin="round" stroke-linecap="round" stroke-dasharray="1.2 7" opacity=".6"/>
<polyline points="279.1,204.5 268.5,223.3 258.9,242.7 248.1,261.4 237.9,280.5 228.2,299.8 216.5,318 207.9,337.9 196.4,356.3 185.6,375 175,393.8 163.3,412.1 153.4,431.3" fill="none" stroke="#ffffff" stroke-width="0.9" stroke-linejoin="round" stroke-linecap="round" stroke-dasharray="1.2 7" opacity=".6"/>
<polyline points="134.1,469.9 124.1,489.1" fill="none" stroke="#ffffff" stroke-width="0.9" stroke-linejoin="round" stroke-linecap="round" stroke-dasharray="1.2 7" opacity=".6"/>
<polyline points="306.8,194.8 297.2,214.2 285.7,232.5 274.1,250.8 263.7,269.7" fill="none" stroke="#ffffff" stroke-width="0.9" stroke-linejoin="round" stroke-linecap="round" stroke-dasharray="1.2 7" opacity=".6"/>
<polyline points="234.6,327.6 224.4,346.7 215.8,366.6" fill="none" stroke="#ffffff" stroke-width="0.9" stroke-linejoin="round" stroke-linecap="round" stroke-dasharray="1.2 7" opacity=".6"/>
<polyline points="195.3,404.6 183.9,423 174.1,442.3 164.9,461.8 153.5,480.2 142.6,498.9" fill="none" stroke="#ffffff" stroke-width="0.9" stroke-linejoin="round" stroke-linecap="round" stroke-dasharray="1.2 7" opacity=".6"/>
<polyline points="321.7,227.2 311,245.9 299.9,264.5 288.1,282.7" fill="none" stroke="#ffffff" stroke-width="0.9" stroke-linejoin="round" stroke-linecap="round" stroke-dasharray="1.2 7" opacity=".6"/>
<polyline points="256.3,339.2 245.6,358 237.2,378" fill="none" stroke="#ffffff" stroke-width="0.9" stroke-linejoin="round" stroke-linecap="round" stroke-dasharray="1.2 7" opacity=".6"/>
<polyline points="217.8,416.5 206.5,435 196.4,454.1 184.8,472.4 173.5,490.9" fill="none" stroke="#ffffff" stroke-width="0.9" stroke-linejoin="round" stroke-linecap="round" stroke-dasharray="1.2 7" opacity=".6"/>
<polyline points="326.3,278.6 315.9,297.5 304.3,315.8 295.7,335.7" fill="none" stroke="#ffffff" stroke-width="0.9" stroke-linejoin="round" stroke-linecap="round" stroke-dasharray="1.2 7" opacity=".6"/>
<polyline points="275,373.6 263.5,392 252.7,410.7 243.3,430.1 234.5,449.9 223.2,468.4 211.4,486.5" fill="none" stroke="#ffffff" stroke-width="0.9" stroke-linejoin="round" stroke-linecap="round" stroke-dasharray="1.2 7" opacity=".6"/>
<polyline points="284.8,403.2 275.5,422.8 267,442.7 256.3,461.5 247.1,481.1" fill="none" stroke="#ffffff" stroke-width="0.9" stroke-linejoin="round" stroke-linecap="round" stroke-dasharray="1.2 7" opacity=".6"/>
<polyline points="316.9,420.3 307.8,439.9 297.5,458.9 286.5,477.5 277.3,497.1" fill="none" stroke="#ffffff" stroke-width="0.9" stroke-linejoin="round" stroke-linecap="round" stroke-dasharray="1.2 7" opacity=".6"/>
<polyline points="325,449.1 313.5,467.5 305.1,487.5" fill="none" stroke="#ffffff" stroke-width="0.9" stroke-linejoin="round" stroke-linecap="round" stroke-dasharray="1.2 7" opacity=".6"/>
<polyline points="233.4,48.6 256.2,40.9 279.1,33.4 301.7,25.3 324.4,17.4 346.1,7.1" fill="none" stroke="#b9a4c6" stroke-width="1.7" stroke-linejoin="round" stroke-linecap="round" opacity=".9"/>
<polyline points="244.5,76 266,65.2 288.6,57" fill="none" stroke="#b9a4c6" stroke-width="1.7" stroke-linejoin="round" stroke-linecap="round" opacity=".9"/>
<polyline points="333.8,40.7 355.8,31.2" fill="none" stroke="#b9a4c6" stroke-width="1.7" stroke-linejoin="round" stroke-linecap="round" opacity=".9"/>
<polyline points="401.7,16.7 423.3,6" fill="none" stroke="#b9a4c6" stroke-width="1.7" stroke-linejoin="round" stroke-linecap="round" opacity=".9"/>
<polyline points="275.7,89.1 298.3,81 320.2,71.1 343,63.4 365.4,54.9 387.6,45.8 409.5,35.8 431.6,26.6 453.6,17" fill="none" stroke="#b9a4c6" stroke-width="1.7" stroke-linejoin="round" stroke-linecap="round" opacity=".9"/>
<polyline points="311.4,113.4 334,105.3 356.8,97.6 379.1,88.9 402.2,81.8 424.1,72.1 446.2,62.7 468.6,54 490.5,44.3" fill="none" stroke="#b9a4c6" stroke-width="1.7" stroke-linejoin="round" stroke-linecap="round" opacity=".9"/>
<polyline points="260.4,179.5 282.9,171 305.6,163.2 327.1,152.4 348.8,141.9 370.4,131.4 391.9,120.5 413.8,110.5 435.3,99.7 456.9,89.2 478.9,79.6 500.7,69.3" fill="none" stroke="#b9a4c6" stroke-width="1.7" stroke-linejoin="round" stroke-linecap="round" opacity=".9"/>
<polyline points="358.5,166.1 380.3,155.9 402.6,147 425.6,139.9 447.7,130.5 470.6,123.2 492.4,112.8 515.3,105.6" fill="none" stroke="#b9a4c6" stroke-width="1.7" stroke-linejoin="round" stroke-linecap="round" opacity=".9"/>
<polyline points="440.5,176.7 463.5,169.6 485.4,159.7 507.9,151.2" fill="none" stroke="#b9a4c6" stroke-width="1.7" stroke-linejoin="round" stroke-linecap="round" opacity=".9"/>
<polyline points="449.2,198.2 471.2,188.7 493.2,178.9 515.5,170.1" fill="none" stroke="#b9a4c6" stroke-width="1.7" stroke-linejoin="round" stroke-linecap="round" opacity=".9"/>
<polyline points="234.8,113.5 243.7,135.8 252.1,158.3 260.8,180.6" fill="none" stroke="#b9a4c6" stroke-width="1.7" stroke-linejoin="round" stroke-linecap="round" opacity=".9"/>
<polyline points="239,60.1 248.6,82 259.3,103.6" fill="none" stroke="#b9a4c6" stroke-width="1.7" stroke-linejoin="round" stroke-linecap="round" opacity=".9"/>
<polyline points="279.6,147.2 288.4,169.5" fill="none" stroke="#b9a4c6" stroke-width="1.7" stroke-linejoin="round" stroke-linecap="round" opacity=".9"/>
<polyline points="254.1,2.2 264.7,23.8 274.9,45.6 284.9,67.4 292.6,90.1 302.5,112" fill="none" stroke="#b9a4c6" stroke-width="1.7" stroke-linejoin="round" stroke-linecap="round" opacity=".9"/>
<polyline points="318,157.5 328.3,179.3" fill="none" stroke="#b9a4c6" stroke-width="1.7" stroke-linejoin="round" stroke-linecap="round" opacity=".9"/>
<polyline points="294.9,11.6 304.6,33.5 313.2,55.9 322.6,78" fill="none" stroke="#b9a4c6" stroke-width="1.7" stroke-linejoin="round" stroke-linecap="round" opacity=".9"/>
<polyline points="341.3,122.2 349,145 358.9,166.9 368.1,189.1" fill="none" stroke="#b9a4c6" stroke-width="1.7" stroke-linejoin="round" stroke-linecap="round" opacity=".9"/>
<polyline points="339.9,19.3 348.5,41.7 358.5,63.5 369.4,85 378.9,107.1 386.8,129.8 395.9,152 404.3,174.5 415,196" fill="none" stroke="#b9a4c6" stroke-width="1.7" stroke-linejoin="round" stroke-linecap="round" opacity=".9"/>
<polyline points="371.4,6.6 379,29.3 387.4,51.8 394.8,74.7 404.4,96.8 411.9,119.6" fill="none" stroke="#b9a4c6" stroke-width="1.7" stroke-linejoin="round" stroke-linecap="round" opacity=".9"/>
<polyline points="430.6,163.8 439.5,186.1" fill="none" stroke="#b9a4c6" stroke-width="1.7" stroke-linejoin="round" stroke-linecap="round" opacity=".9"/>
<polyline points="406.8,18.1 417.3,39.7 425.6,62.3 433.1,85.2 441.3,107.7 452.1,129.3 459.8,152 468.5,174.4 477.8,196.5" fill="none" stroke="#b9a4c6" stroke-width="1.7" stroke-linejoin="round" stroke-linecap="round" opacity=".9"/>
<polyline points="439.4,5 449.3,26.8 456.5,49.8 465,72.2 472.7,95.1 481.1,117.5 491.9,139 501,161.3 511.5,182.9" fill="none" stroke="#b9a4c6" stroke-width="1.7" stroke-linejoin="round" stroke-linecap="round" opacity=".9"/>
<polyline points="494.8,60.2 502.4,83 510.3,105.7 517.9,128.6" fill="none" stroke="#b9a4c6" stroke-width="1.7" stroke-linejoin="round" stroke-linecap="round" opacity=".9"/>
<polyline points="233.4,48.6 256.2,40.9 279.1,33.4 301.7,25.3 324.4,17.4 346.1,7.1" fill="none" stroke="#ffffff" stroke-width="0.9" stroke-linejoin="round" stroke-linecap="round" stroke-dasharray="1.2 7" opacity=".6"/>
<polyline points="244.5,76 266,65.2 288.6,57" fill="none" stroke="#ffffff" stroke-width="0.9" stroke-linejoin="round" stroke-linecap="round" stroke-dasharray="1.2 7" opacity=".6"/>
<polyline points="333.8,40.7 355.8,31.2" fill="none" stroke="#ffffff" stroke-width="0.9" stroke-linejoin="round" stroke-linecap="round" stroke-dasharray="1.2 7" opacity=".6"/>
<polyline points="401.7,16.7 423.3,6" fill="none" stroke="#ffffff" stroke-width="0.9" stroke-linejoin="round" stroke-linecap="round" stroke-dasharray="1.2 7" opacity=".6"/>
<polyline points="275.7,89.1 298.3,81 320.2,71.1 343,63.4 365.4,54.9 387.6,45.8 409.5,35.8 431.6,26.6 453.6,17" fill="none" stroke="#ffffff" stroke-width="0.9" stroke-linejoin="round" stroke-linecap="round" stroke-dasharray="1.2 7" opacity=".6"/>
<polyline points="311.4,113.4 334,105.3 356.8,97.6 379.1,88.9 402.2,81.8 424.1,72.1 446.2,62.7 468.6,54 490.5,44.3" fill="none" stroke="#ffffff" stroke-width="0.9" stroke-linejoin="round" stroke-linecap="round" stroke-dasharray="1.2 7" opacity=".6"/>
<polyline points="260.4,179.5 282.9,171 305.6,163.2 327.1,152.4 348.8,141.9 370.4,131.4 391.9,120.5 413.8,110.5 435.3,99.7 456.9,89.2 478.9,79.6 500.7,69.3" fill="none" stroke="#ffffff" stroke-width="0.9" stroke-linejoin="round" stroke-linecap="round" stroke-dasharray="1.2 7" opacity=".6"/>
<polyline points="358.5,166.1 380.3,155.9 402.6,147 425.6,139.9 447.7,130.5 470.6,123.2 492.4,112.8 515.3,105.6" fill="none" stroke="#ffffff" stroke-width="0.9" stroke-linejoin="round" stroke-linecap="round" stroke-dasharray="1.2 7" opacity=".6"/>
<polyline points="440.5,176.7 463.5,169.6 485.4,159.7 507.9,151.2" fill="none" stroke="#ffffff" stroke-width="0.9" stroke-linejoin="round" stroke-linecap="round" stroke-dasharray="1.2 7" opacity=".6"/>
<polyline points="449.2,198.2 471.2,188.7 493.2,178.9 515.5,170.1" fill="none" stroke="#ffffff" stroke-width="0.9" stroke-linejoin="round" stroke-linecap="round" stroke-dasharray="1.2 7" opacity=".6"/>
<polyline points="234.8,113.5 243.7,135.8 252.1,158.3 260.8,180.6" fill="none" stroke="#ffffff" stroke-width="0.9" stroke-linejoin="round" stroke-linecap="round" stroke-dasharray="1.2 7" opacity=".6"/>
<polyline points="239,60.1 248.6,82 259.3,103.6" fill="none" stroke="#ffffff" stroke-width="0.9" stroke-linejoin="round" stroke-linecap="round" stroke-dasharray="1.2 7" opacity=".6"/>
<polyline points="279.6,147.2 288.4,169.5" fill="none" stroke="#ffffff" stroke-width="0.9" stroke-linejoin="round" stroke-linecap="round" stroke-dasharray="1.2 7" opacity=".6"/>
<polyline points="254.1,2.2 264.7,23.8 274.9,45.6 284.9,67.4 292.6,90.1 302.5,112" fill="none" stroke="#ffffff" stroke-width="0.9" stroke-linejoin="round" stroke-linecap="round" stroke-dasharray="1.2 7" opacity=".6"/>
<polyline points="318,157.5 328.3,179.3" fill="none" stroke="#ffffff" stroke-width="0.9" stroke-linejoin="round" stroke-linecap="round" stroke-dasharray="1.2 7" opacity=".6"/>
<polyline points="294.9,11.6 304.6,33.5 313.2,55.9 322.6,78" fill="none" stroke="#ffffff" stroke-width="0.9" stroke-linejoin="round" stroke-linecap="round" stroke-dasharray="1.2 7" opacity=".6"/>
<polyline points="341.3,122.2 349,145 358.9,166.9 368.1,189.1" fill="none" stroke="#ffffff" stroke-width="0.9" stroke-linejoin="round" stroke-linecap="round" stroke-dasharray="1.2 7" opacity=".6"/>
<polyline points="339.9,19.3 348.5,41.7 358.5,63.5 369.4,85 378.9,107.1 386.8,129.8 395.9,152 404.3,174.5 415,196" fill="none" stroke="#ffffff" stroke-width="0.9" stroke-linejoin="round" stroke-linecap="round" stroke-dasharray="1.2 7" opacity=".6"/>
<polyline points="371.4,6.6 379,29.3 387.4,51.8 394.8,74.7 404.4,96.8 411.9,119.6" fill="none" stroke="#ffffff" stroke-width="0.9" stroke-linejoin="round" stroke-linecap="round" stroke-dasharray="1.2 7" opacity=".6"/>
<polyline points="430.6,163.8 439.5,186.1" fill="none" stroke="#ffffff" stroke-width="0.9" stroke-linejoin="round" stroke-linecap="round" stroke-dasharray="1.2 7" opacity=".6"/>
<polyline points="406.8,18.1 417.3,39.7 425.6,62.3 433.1,85.2 441.3,107.7 452.1,129.3 459.8,152 468.5,174.4 477.8,196.5" fill="none" stroke="#ffffff" stroke-width="0.9" stroke-linejoin="round" stroke-linecap="round" stroke-dasharray="1.2 7" opacity=".6"/>
<polyline points="439.4,5 449.3,26.8 456.5,49.8 465,72.2 472.7,95.1 481.1,117.5 491.9,139 501,161.3 511.5,182.9" fill="none" stroke="#ffffff" stroke-width="0.9" stroke-linejoin="round" stroke-linecap="round" stroke-dasharray="1.2 7" opacity=".6"/>
<polyline points="494.8,60.2 502.4,83 510.3,105.7 517.9,128.6" fill="none" stroke="#ffffff" stroke-width="0.9" stroke-linejoin="round" stroke-linecap="round" stroke-dasharray="1.2 7" opacity=".6"/>
</g>
<polygon points="360,0 592,0 588,18 580,38 560,52 530,66 495,72 470,70 440,52 410,32 385,15" fill="#cdebb0" />
<polygon points="374,0 517,0 525,22 518,42 500,60 480,63 455,52 425,35 398,17" fill="#aad3df" />
<polygon points="360,0 592,0 588,18 580,38 560,52 530,66 495,72 470,70 440,52 410,32 385,15" fill="url(#wet)" />
<polygon points="561,56 603,35 612,54 570,75" fill="#aad3df" />
<polygon points="378,280 392,279 417,275 442,272 474,260 492,248 508,246 520,248 532,240 554,237.5 577,236 592,240 612,255 623,264 623,310 604,324 574,336 542,347 512,353 417,376 360,386 350,380 338,370 332,348 337,327 355,302" fill="#aad3df" />
<polygon points="374,284 355,302 337,327 332,348 338,370 350,382 322,384 318,360 322,335 340,312" fill="#cfcfb9" />
<polygon points="314,388 360,388 417,378 512,355 545,345 560,352 565,390 545,400 517,415 492,428 454,435 417,434 392,439 367,438 322,434 316,420 308,405" fill="#aad3df" />
<polygon points="547,347 623,318 623,490 600,470 590,430 585,395 565,385" fill="#aad3df" />
<polygon points="579.5,355 623,350 623,380 599.5,390 589.5,405 567,410 564.5,390 572,370" fill="#e0dfdd" />
<polygon points="435,380 462,374 489,369 511,366 516,395 489,389 462,382.5" fill="#cdebb0" />
<polygon points="435,380 462,374 489,369 511,366 516,395 489,389 462,382.5" fill="url(#wet)" />
<polygon points="350,392 380,388 412,382 395,392 372,400 366,420 352,418" fill="#f2efe9" />
<polygon points="516,360 540,352 548,385 522,392" fill="#dddcda" />
<polygon points="318,436 367,439 392,440 417,435 454,436 492,429 517,416 545,401 548,501 330,501 326,470" fill="#cdebb0" />
<polygon points="318,436 367,439 392,440 417,435 454,436 492,429 517,416 545,401 548,501 330,501 326,470" fill="url(#wet)" />
<polygon points="380,450 415,445 425,475 395,485" fill="#d9d8d6" />
<polygon points="330,470 360,468 395,501 335,501" fill="#dddcda" />
<polygon points="536,398 572,385 590,430 600,470 623,490 623,501 536,501 535,440" fill="#dddcda" />
<polygon points="536,398 572,385 590,430 600,470 623,490 623,501 536,501 535,440" fill="url(#fine2)" opacity=".6"/>
<polygon points="566,388 592,380 600,400 575,408" fill="#ebdbe8" />
<polygon points="590,432 600,470 623,492 623,501 596,501 586,460" fill="#cdebb0" />
<polygon points="102,501 105.5,474 130,441 158,422 187,415 206,416 220,427 234,448 244,474 248,501" fill="#cdebb0" />
<polygon points="102,501 105.5,474 130,441 158,422 187,415 206,416 220,427 234,448 244,474 248,501" fill="url(#wet)" />
<polyline points="140,445 205,501" fill="none" stroke="#aad3df" stroke-width="1" stroke-linejoin="round" stroke-linecap="round" />
<polyline points="0,110.8 10.4,107 43,93.5 58.9,72.7 90,62.3 97,71 133,65 136.8,74.4 155.8,91.8 180,98.7 187,109 180,121 162.7,135 155.8,143.7 150,160" fill="none" stroke="#b48bc0" stroke-width="1.8" stroke-linejoin="round" stroke-linecap="round" stroke-dasharray="7 2 2 2" opacity=".85"/>
<polyline points="200.8,57 195.6,81.4 183.5,98.7 187,103.9 199,117.7 216.4,129.8 249.3,133.3 262,138" fill="none" stroke="#b48bc0" stroke-width="1.8" stroke-linejoin="round" stroke-linecap="round" stroke-dasharray="7 2 2 2" opacity=".85"/>
<polyline points="190,0 200,20 195,45 160,30 150,15" fill="none" stroke="#b48bc0" stroke-width="1.5" stroke-linejoin="round" stroke-linecap="round" stroke-dasharray="7 2 2 2" opacity=".85"/>
<polyline points="0,168 15,180 30,175 50,185 60,205 55,230 70,250" fill="none" stroke="#b48bc0" stroke-width="1.5" stroke-linejoin="round" stroke-linecap="round" stroke-dasharray="7 2 2 2" opacity=".85"/>
<polyline points="310,0 340,25 370,50 395,45" fill="none" stroke="#b48bc0" stroke-width="2" stroke-linejoin="round" stroke-linecap="round" stroke-dasharray="7 2 2 2" opacity=".85"/>
<polyline points="340,20 380,45 440,52 470,70 495,72 530,66 560,52 580,38 583,20 562,5" fill="none" stroke="#b48bc0" stroke-width="1.8" stroke-linejoin="round" stroke-linecap="round" stroke-dasharray="7 2 2 2" opacity=".85"/>
<polyline points="560,60 571,75 548,100 544,115" fill="none" stroke="#b48bc0" stroke-width="1.8" stroke-linejoin="round" stroke-linecap="round" stroke-dasharray="7 2 2 2" opacity=".85"/>
<polyline points="481,162 534,160 571,158 585,152" fill="none" stroke="#b48bc0" stroke-width="1.8" stroke-linejoin="round" stroke-linecap="round" stroke-dasharray="7 2 2 2" opacity=".85"/>
<polyline points="440,0 452,100 470,200 485,260 500,330 515,380" fill="none" stroke="#b48bc0" stroke-width="1.3" stroke-linejoin="round" stroke-linecap="round" stroke-dasharray="9 3 2 3" opacity=".8"/>
<polyline points="322,345 360,358 417,372 470,390" fill="none" stroke="#b48bc0" stroke-width="1.3" stroke-linejoin="round" stroke-linecap="round" stroke-dasharray="9 3 2 3" opacity=".8"/>
<polyline points="400,385 380,420 355,460 340,490" fill="none" stroke="#b48bc0" stroke-width="1.3" stroke-linejoin="round" stroke-linecap="round" stroke-dasharray="7 2 2 2" opacity=".85"/>
<polyline points="300,470 340,462 380,448 420,440" fill="none" stroke="#b48bc0" stroke-width="1.3" stroke-linejoin="round" stroke-linecap="round" stroke-dasharray="7 2 2 2" opacity=".85"/>
<polyline points="228,57 281,60" fill="none" stroke="#ffffff" stroke-width="1.6" stroke-linejoin="round" stroke-linecap="round" />
<polyline points="231,72 266,95 275,100" fill="none" stroke="#ffffff" stroke-width="1.6" stroke-linejoin="round" stroke-linecap="round" />
<polyline points="330,85 345,120 358,145" fill="none" stroke="#ffffff" stroke-width="1.6" stroke-linejoin="round" stroke-linecap="round" />
<polyline points="452,68 480,90 500,110" fill="none" stroke="#ffffff" stroke-width="1.6" stroke-linejoin="round" stroke-linecap="round" />
<polyline points="230,225 255,215 262,230" fill="none" stroke="#ffffff" stroke-width="1.6" stroke-linejoin="round" stroke-linecap="round" />
<polyline points="160,295 200,290 215,300" fill="none" stroke="#ffffff" stroke-width="1.6" stroke-linejoin="round" stroke-linecap="round" />
<polyline points="420,65 440,52" fill="none" stroke="#ffffff" stroke-width="1.6" stroke-linejoin="round" stroke-linecap="round" />
<polyline points="426,62 466,92" fill="none" stroke="#ffffff" stroke-width="1.6" stroke-linejoin="round" stroke-linecap="round" />
<polyline points="0,316 49,329 68,333 100,348 130,351 148,362 190,386 215,407 255,425 290,440 330,480 345,501" fill="none" stroke="#6f6f6f" stroke-width="1.5" stroke-linejoin="round" stroke-linecap="round" />
<polyline points="545,400 560,380 590,362 623,358" fill="none" stroke="#6f6f6f" stroke-width="1.2" stroke-linejoin="round" stroke-linecap="round" />
<polyline points="548,501 555,450 560,420 575,395" fill="none" stroke="#6f6f6f" stroke-width="1.2" stroke-linejoin="round" stroke-linecap="round" />
<polyline points="285,205 285,248 287,268 280,290 275,302 290,330 295,345" fill="none" stroke="#c9b8a0" stroke-width="1.6" stroke-linejoin="round" stroke-linecap="round" />
<polyline points="296,428 312,442 322,462 330,485 338,501" fill="none" stroke="#6f6f6f" stroke-width="1.2" stroke-linejoin="round" stroke-linecap="round" />
<polyline points="300,426 316,440 326,462 334,501" fill="none" stroke="#8a8a8a" stroke-width="1" stroke-linejoin="round" stroke-linecap="round" />
<polygon points="313,406 321,406 321,431 313,431" fill="#cfcfb9" />
<polygon points="331,397.5 345,397.5 345,428 331,428" fill="#cfcfb9" />
<polyline points="95,33 93,70 91,100 93,130 92,170 94,230 96,270" fill="none" stroke="#c9cc8a" stroke-width="3.4000000000000004" stroke-linejoin="round" stroke-linecap="round" />
<polyline points="95,33 93,70 91,100 93,130 92,170 94,230 96,270" fill="none" stroke="#f6f9b8" stroke-width="2.2" stroke-linejoin="round" stroke-linecap="round" />
<polyline points="370,51 398,82 428,103 437,115" fill="none" stroke="#c9cc8a" stroke-width="3.8" stroke-linejoin="round" stroke-linecap="round" />
<polyline points="370,51 398,82 428,103 437,115" fill="none" stroke="#f6f9b8" stroke-width="2.6" stroke-linejoin="round" stroke-linecap="round" />
<polyline points="428,103 398,121 359,143 330,152" fill="none" stroke="#c9cc8a" stroke-width="3.4000000000000004" stroke-linejoin="round" stroke-linecap="round" />
<polyline points="428,103 398,121 359,143 330,152" fill="none" stroke="#f6f9b8" stroke-width="2.2" stroke-linejoin="round" stroke-linecap="round" />
<polyline points="437,112 450,122 472,118 488,150 497,172 504,200 511,215 523,237" fill="none" stroke="#c9cc8a" stroke-width="3.5999999999999996" stroke-linejoin="round" stroke-linecap="round" />
<polyline points="437,112 450,122 472,118 488,150 497,172 504,200 511,215 523,237" fill="none" stroke="#f6f9b8" stroke-width="2.4" stroke-linejoin="round" stroke-linecap="round" />
<polyline points="377,278 404,267 442,257 474,245 497,230 511,215" fill="none" stroke="#c9cc8a" stroke-width="3.8" stroke-linejoin="round" stroke-linecap="round" />
<polyline points="377,278 404,267 442,257 474,245 497,230 511,215" fill="none" stroke="#f6f9b8" stroke-width="2.6" stroke-linejoin="round" stroke-linecap="round" />
<polyline points="518,215 544,205 572,210 581,228 572,237 523,237" fill="none" stroke="#c9cc8a" stroke-width="3.4000000000000004" stroke-linejoin="round" stroke-linecap="round" />
<polyline points="518,215 544,205 572,210 581,228 572,237 523,237" fill="none" stroke="#f6f9b8" stroke-width="2.2" stroke-linejoin="round" stroke-linecap="round" />
<polyline points="604,165 609,180 623,195" fill="none" stroke="#c9cc8a" stroke-width="3.4000000000000004" stroke-linejoin="round" stroke-linecap="round" />
<polyline points="604,165 609,180 623,195" fill="none" stroke="#f6f9b8" stroke-width="2.2" stroke-linejoin="round" stroke-linecap="round" />
<polyline points="374,285 342,312 327,330 320,347 317,365 332,375 322,382" fill="none" stroke="#c9cc8a" stroke-width="4.0" stroke-linejoin="round" stroke-linecap="round" />
<polyline points="374,285 342,312 327,330 320,347 317,365 332,375 322,382" fill="none" stroke="#f6f9b8" stroke-width="2.8" stroke-linejoin="round" stroke-linecap="round" />
<polyline points="317,352 290,352 270,350" fill="none" stroke="#c9cc8a" stroke-width="3.4000000000000004" stroke-linejoin="round" stroke-linecap="round" />
<polyline points="317,352 290,352 270,350" fill="none" stroke="#f6f9b8" stroke-width="2.2" stroke-linejoin="round" stroke-linecap="round" />
<polyline points="317,368 292,370 272,372" fill="none" stroke="#c9cc8a" stroke-width="3.4000000000000004" stroke-linejoin="round" stroke-linecap="round" />
<polyline points="317,368 292,370 272,372" fill="none" stroke="#f6f9b8" stroke-width="2.2" stroke-linejoin="round" stroke-linecap="round" />
<polyline points="225,240 237,255 243,268" fill="none" stroke="#c9cc8a" stroke-width="3.4000000000000004" stroke-linejoin="round" stroke-linecap="round" />
<polyline points="225,240 237,255 243,268" fill="none" stroke="#f6f9b8" stroke-width="2.2" stroke-linejoin="round" stroke-linecap="round" />
<polyline points="87,490 93,463 109,447 125,422 133,414 160,405" fill="none" stroke="#c9cc8a" stroke-width="3.2" stroke-linejoin="round" stroke-linecap="round" />
<polyline points="87,490 93,463 109,447 125,422 133,414 160,405" fill="none" stroke="#f6f9b8" stroke-width="2" stroke-linejoin="round" stroke-linecap="round" />
<polyline points="69,438 76,456 84,477" fill="none" stroke="#c9cc8a" stroke-width="2.8" stroke-linejoin="round" stroke-linecap="round" />
<polyline points="69,438 76,456 84,477" fill="none" stroke="#f6f9b8" stroke-width="1.6" stroke-linejoin="round" stroke-linecap="round" />
<polyline points="100,422 134,413 156,405 187,396 202,394 230,392" fill="none" stroke="#c9cc8a" stroke-width="3.0" stroke-linejoin="round" stroke-linecap="round" />
<polyline points="100,422 134,413 156,405 187,396 202,394 230,392" fill="none" stroke="#f6f9b8" stroke-width="1.8" stroke-linejoin="round" stroke-linecap="round" />
<polyline points="0,362 18,369 43,376 53,379 77,379 92,377 109,373 123,368 148,362 170,357 188,354 218,352 250,342" fill="none" stroke="#c9cc8a" stroke-width="3.0" stroke-linejoin="round" stroke-linecap="round" />
<polyline points="0,362 18,369 43,376 53,379 77,379 92,377 109,373 123,368 148,362 170,357 188,354 218,352 250,342" fill="none" stroke="#f6f9b8" stroke-width="1.8" stroke-linejoin="round" stroke-linecap="round" />
<polyline points="98,269 104,291 115,315 133,336 142,348 148,362" fill="none" stroke="#c9cc8a" stroke-width="3.0" stroke-linejoin="round" stroke-linecap="round" />
<polyline points="98,269 104,291 115,315 133,336 142,348 148,362" fill="none" stroke="#f6f9b8" stroke-width="1.8" stroke-linejoin="round" stroke-linecap="round" />
<polyline points="160,311 178,334 198,349 216,352" fill="none" stroke="#c9cc8a" stroke-width="3.0" stroke-linejoin="round" stroke-linecap="round" />
<polyline points="160,311 178,334 198,349 216,352" fill="none" stroke="#f6f9b8" stroke-width="1.8" stroke-linejoin="round" stroke-linecap="round" />
<polyline points="575,330 600,320 623,312" fill="none" stroke="#c9cc8a" stroke-width="3.4000000000000004" stroke-linejoin="round" stroke-linecap="round" />
<polyline points="575,330 600,320 623,312" fill="none" stroke="#f6f9b8" stroke-width="2.2" stroke-linejoin="round" stroke-linecap="round" />
<polyline points="279,317 280,345 282,362 288,376 296,384" fill="none" stroke="#c9cc8a" stroke-width="3.4000000000000004" stroke-linejoin="round" stroke-linecap="round" />
<polyline points="279,317 280,345 282,362 288,376 296,384" fill="none" stroke="#f6f9b8" stroke-width="2.2" stroke-linejoin="round" stroke-linecap="round" />
<polyline points="307,403 298,415 288,427" fill="none" stroke="#c9cc8a" stroke-width="3.2" stroke-linejoin="round" stroke-linecap="round" />
<polyline points="307,403 298,415 288,427" fill="none" stroke="#f6f9b8" stroke-width="2" stroke-linejoin="round" stroke-linecap="round" />
<polyline points="262,345 268,330 279,322" fill="none" stroke="#c9cc8a" stroke-width="2.8" stroke-linejoin="round" stroke-linecap="round" />
<polyline points="262,345 268,330 279,322" fill="none" stroke="#f6f9b8" stroke-width="1.6" stroke-linejoin="round" stroke-linecap="round" />
<polyline points="240,395 255,388 270,386 288,384" fill="none" stroke="#c9cc8a" stroke-width="2.8" stroke-linejoin="round" stroke-linecap="round" />
<polyline points="240,395 255,388 270,386 288,384" fill="none" stroke="#f6f9b8" stroke-width="1.6" stroke-linejoin="round" stroke-linecap="round" />
<polyline points="402,142 437,124 465,108 486,92 511,94 535,108 546,115 572,125 583,135 600,145 623,150" fill="none" stroke="#d1a76a" stroke-width="3.8" stroke-linejoin="round" stroke-linecap="round" />
<polyline points="402,142 437,124 465,108 486,92 511,94 535,108 546,115 572,125 583,135 600,145 623,150" fill="none" stroke="#fcd6a4" stroke-width="2.6" stroke-linejoin="round" stroke-linecap="round" />
<polyline points="292,312 294,345 296,370 298,392" fill="none" stroke="#d1a76a" stroke-width="3.8" stroke-linejoin="round" stroke-linecap="round" />
<polyline points="292,312 294,345 296,370 298,392" fill="none" stroke="#fcd6a4" stroke-width="2.6" stroke-linejoin="round" stroke-linecap="round" />
<polyline points="0,316 49,329 68,333 100,348 130,351 148,362" fill="none" stroke="#d1a76a" stroke-width="4.0" stroke-linejoin="round" stroke-linecap="round" />
<polyline points="0,316 49,329 68,333 100,348 130,351 148,362" fill="none" stroke="#f5bd84" stroke-width="2.8" stroke-linejoin="round" stroke-linecap="round" />
<polyline points="232,385 245,420 262,460 272,501" fill="none" stroke="#d1a76a" stroke-width="3.2" stroke-linejoin="round" stroke-linecap="round" />
<polyline points="232,385 245,420 262,460 272,501" fill="none" stroke="#fcd6a4" stroke-width="2" stroke-linejoin="round" stroke-linecap="round" />
<polyline points="337,290 380,270 417,255 442,245 481,228 511,212 546,195 581,172 604,162 623,155" fill="none" stroke="#d58a74" stroke-width="4.4" stroke-linejoin="round" stroke-linecap="round" />
<polyline points="337,290 380,270 417,255 442,245 481,228 511,212 546,195 581,172 604,162 623,155" fill="none" stroke="#f9b29c" stroke-width="3.2" stroke-linejoin="round" stroke-linecap="round" />
<polyline points="548,192 581,215 604,232 623,248" fill="none" stroke="#d58a74" stroke-width="4.0" stroke-linejoin="round" stroke-linecap="round" />
<polyline points="548,192 581,215 604,232 623,248" fill="none" stroke="#f9b29c" stroke-width="2.8" stroke-linejoin="round" stroke-linecap="round" />
<polyline points="317,386 359,385 417,375 512,352 567,342 604,330 623,305" fill="none" stroke="#d58a74" stroke-width="4.0" stroke-linejoin="round" stroke-linecap="round" />
<polyline points="317,386 359,385 417,375 512,352 567,342 604,330 623,305" fill="none" stroke="#f9b29c" stroke-width="2.8" stroke-linejoin="round" stroke-linecap="round" />
<polyline points="585,0 604,18 613,39 623,53" fill="none" stroke="#d58a74" stroke-width="4.2" stroke-linejoin="round" stroke-linecap="round" />
<polyline points="585,0 604,18 613,39 623,53" fill="none" stroke="#f9b29c" stroke-width="3" stroke-linejoin="round" stroke-linecap="round" />
<polyline points="617,180 610,165 623,150" fill="none" stroke="#d58a74" stroke-width="4.2" stroke-linejoin="round" stroke-linecap="round" />
<polyline points="617,180 610,165 623,150" fill="none" stroke="#f9b29c" stroke-width="3" stroke-linejoin="round" stroke-linecap="round" />
<polyline points="0,428 37,407 59,391 77,380 92,378" fill="none" stroke="#d58a74" stroke-width="4.2" stroke-linejoin="round" stroke-linecap="round" />
<polyline points="0,428 37,407 59,391 77,380 92,378" fill="none" stroke="#f9b29c" stroke-width="3" stroke-linejoin="round" stroke-linecap="round" />
<polyline points="0,478 75,452 112,440 150,420 175,410 200,409 217,417 230,442 245,470 250,501" fill="none" stroke="#d58a74" stroke-width="4.2" stroke-linejoin="round" stroke-linecap="round" />
<polyline points="0,478 75,452 112,440 150,420 175,410 200,409 217,417 230,442 245,470 250,501" fill="none" stroke="#f9b29c" stroke-width="3" stroke-linejoin="round" stroke-linecap="round" />
<polyline points="142,247 148,259 166,277 184,291 192,309 207,336 216,354 231,380 232,385" fill="none" stroke="#d58a74" stroke-width="3.8" stroke-linejoin="round" stroke-linecap="round" />
<polyline points="142,247 148,259 166,277 184,291 192,309 207,336 216,354 231,380 232,385" fill="none" stroke="#f9b29c" stroke-width="2.6" stroke-linejoin="round" stroke-linecap="round" />
<polyline points="122,185 130,205 142,247" fill="none" stroke="#d58a74" stroke-width="3.8" stroke-linejoin="round" stroke-linecap="round" />
<polyline points="122,185 130,205 142,247" fill="none" stroke="#f9b29c" stroke-width="2.6" stroke-linejoin="round" stroke-linecap="round" />
<polyline points="0,180 70,187 110,186 140,185" fill="none" stroke="#f9b29c" stroke-width="2.2" stroke-linejoin="round" stroke-linecap="round" stroke-dasharray="4 3"/>
<polyline points="511,357 516,388 524,395.6 543,396.3 547,403 545,410 536.5,412 535,447 536,501" fill="none" stroke="#d58a74" stroke-width="3.5999999999999996" stroke-linejoin="round" stroke-linecap="round" />
<polyline points="511,357 516,388 524,395.6 543,396.3 547,403 545,410 536.5,412 535,447 536,501" fill="none" stroke="#f9b29c" stroke-width="2.4" stroke-linejoin="round" stroke-linecap="round" />
<polyline points="547,403 556,420 560,450 556,501" fill="none" stroke="#d58a74" stroke-width="3.0" stroke-linejoin="round" stroke-linecap="round" />
<polyline points="547,403 556,420 560,450 556,501" fill="none" stroke="#f9b29c" stroke-width="1.8" stroke-linejoin="round" stroke-linecap="round" />
<polyline points="398,501 410,470 425,452 445,450 470,470 500,490 520,501" fill="none" stroke="#d58a74" stroke-width="3.4000000000000004" stroke-linejoin="round" stroke-linecap="round" />
<polyline points="398,501 410,470 425,452 445,450 470,470 500,490 520,501" fill="none" stroke="#f9b29c" stroke-width="2.2" stroke-linejoin="round" stroke-linecap="round" />
<polyline points="322,436 340,455 370,470 398,501" fill="none" stroke="#d58a74" stroke-width="3.4000000000000004" stroke-linejoin="round" stroke-linecap="round" />
<polyline points="322,436 340,455 370,470 398,501" fill="none" stroke="#f9b29c" stroke-width="2.2" stroke-linejoin="round" stroke-linecap="round" />
<polyline points="187,412 188,392" fill="none" stroke="#d58a74" stroke-width="3.5999999999999996" stroke-linejoin="round" stroke-linecap="round" />
<polyline points="187,412 188,392" fill="none" stroke="#f9b29c" stroke-width="2.4" stroke-linejoin="round" stroke-linecap="round" />
<polyline points="273,101 281,119 289,143 300,165" fill="none" stroke="#d58a74" stroke-width="3.5999999999999996" stroke-linejoin="round" stroke-linecap="round" />
<polyline points="273,101 281,119 289,143 300,165" fill="none" stroke="#f9b29c" stroke-width="2.4" stroke-linejoin="round" stroke-linecap="round" />
<polyline points="72.7,0 80,14 93.5,33" fill="none" stroke="#c9995c" stroke-width="3.0" stroke-linejoin="round" stroke-linecap="round" />
<polyline points="72.7,0 80,14 93.5,33" fill="none" stroke="#f0b878" stroke-width="1.8" stroke-linejoin="round" stroke-linecap="round" />
<polyline points="78,0 82,12 92,25 110,38 140,52 170,56 205,56 232,60 255,82 275,100 307,130 326,143 345,165" fill="none" stroke="#c4687c" stroke-width="4.6" stroke-linejoin="round" stroke-linecap="round" />
<polyline points="78,0 82,12 92,25 110,38 140,52 170,56 205,56 232,60 255,82 275,100 307,130 326,143 345,165" fill="none" stroke="#e892a2" stroke-width="3.4" stroke-linejoin="round" stroke-linecap="round" />
<polyline points="101,372 101,407 100,501" fill="none" stroke="#d58a74" stroke-width="4.2" stroke-linejoin="round" stroke-linecap="round" />
<polyline points="101,372 101,407 100,501" fill="none" stroke="#f9b29c" stroke-width="3" stroke-linejoin="round" stroke-linecap="round" />
<polyline points="330,150 300,190 270,222 250,240 207,269 175,291 148,312 118,324 108,333 104,348 101,365 101,374" fill="none" stroke="#c4687c" stroke-width="4.2" stroke-linejoin="round" stroke-linecap="round" />
<polyline points="330,150 300,190 270,222 250,240 207,269 175,291 148,312 118,324 108,333 104,348 101,365 101,374" fill="none" stroke="#e892a2" stroke-width="3" stroke-linejoin="round" stroke-linecap="round" />
<polyline points="339,215 340,250 339,280 337,290 317,305 302,335 304,367 307,405 317,435 327,455 330,480 330,501" fill="none" stroke="#c4687c" stroke-width="4.2" stroke-linejoin="round" stroke-linecap="round" />
<polyline points="339,215 340,250 339,280 337,290 317,305 302,335 304,367 307,405 317,435 327,455 330,480 330,501" fill="none" stroke="#e892a2" stroke-width="3" stroke-linejoin="round" stroke-linecap="round" />
<polyline points="247,241 279,267 299,276 315,287 328,297 337,292" fill="none" stroke="#d58a74" stroke-width="3.5999999999999996" stroke-linejoin="round" stroke-linecap="round" />
<polyline points="247,241 279,267 299,276 315,287 328,297 337,292" fill="none" stroke="#f9b29c" stroke-width="2.4" stroke-linejoin="round" stroke-linecap="round" />
</svg>
</div>
<div class="abs" style="left:491px;top:454px;width:621px;height:500px;overflow:hidden">
<div class="abs" style="left:-1px;top:-1px;width:623px;height:501px">
<svg class="abs" style="left:0;top:0" width="623" height="501" viewBox="0 0 623 501" font-family="DejaVu Sans, Liberation Sans, sans-serif" text-anchor="middle">
<circle cx="311.400" cy="250.300" r="66.500" fill="#3388ff" fill-opacity=".2" stroke="#3388ff" stroke-width="3"/>
<text x="66" y="160.235" font-size="12.1" fill="#8d5aa0" stroke="#fff" stroke-opacity=".55" stroke-width="1.600" paint-order="stroke" stroke-linejoin="round" direction="rtl" >معتمدية منيهلة</text>
<text x="95" y="197.465" font-size="9.9" fill="#2a2a2a" stroke="#fff" stroke-opacity=".55" stroke-width="1.600" paint-order="stroke" stroke-linejoin="round" direction="rtl" >المنيهلة</text>
<text x="136" y="180.465" font-size="9.9" fill="#2a2a2a" stroke="#fff" stroke-opacity=".55" stroke-width="1.600" paint-order="stroke" stroke-linejoin="round" direction="rtl" >المنزه</text>
<text x="227.5" y="211.657" font-size="10.45" fill="#2a2a2a" stroke="#fff" stroke-opacity=".55" stroke-width="1.600" paint-order="stroke" stroke-linejoin="round" direction="rtl" >المنزه 6</text>
<text x="145" y="226.657" font-size="10.45" fill="#2a2a2a" stroke="#fff" stroke-opacity=".55" stroke-width="1.600" paint-order="stroke" stroke-linejoin="round" direction="rtl" >حدائق المنزه</text>
<text x="144.5" y="239.657" font-size="10.45" fill="#2a2a2a" stroke="#fff" stroke-opacity=".55" stroke-width="1.600" paint-order="stroke" stroke-linejoin="round" direction="rtl" >1</text>
<text x="212" y="238.157" font-size="10.45" fill="#2a2a2a" stroke="#fff" stroke-opacity=".55" stroke-width="1.600" paint-order="stroke" stroke-linejoin="round" direction="rtl" >المنار 2</text>
<text x="287.5" y="125.85" font-size="11" fill="#2a2a2a" stroke="#fff" stroke-opacity=".55" stroke-width="1.600" paint-order="stroke" stroke-linejoin="round" direction="rtl" >المستقبل</text>
<text x="335.5" y="80.6575" font-size="10.45" fill="#2a2a2a" stroke="#fff" stroke-opacity=".55" stroke-width="1.600" paint-order="stroke" stroke-linejoin="round" direction="rtl" >حي المنصورة</text>
<text x="335.5" y="93.6575" font-size="10.45" fill="#2a2a2a" stroke="#fff" stroke-opacity=".55" stroke-width="1.600" paint-order="stroke" stroke-linejoin="round" direction="rtl" >1</text>
<text x="421" y="56.1575" font-size="10.45" fill="#2a2a2a" stroke="#fff" stroke-opacity=".55" stroke-width="1.600" paint-order="stroke" stroke-linejoin="round" direction="rtl" >شطرانة 3</text>
<text x="427.5" y="98.4275" font-size="12.65" fill="#8d5aa0" stroke="#fff" stroke-opacity=".55" stroke-width="1.600" paint-order="stroke" stroke-linejoin="round" direction="rtl" >معتمدية سكرة</text>
<text x="469" y="119.465" font-size="9.9" fill="#2a2a2a" stroke="#fff" stroke-opacity=".55" stroke-width="1.600" paint-order="stroke" stroke-linejoin="round" direction="rtl" >سكرة</text>
<text x="424.5" y="129.273" font-size="9.35" fill="#8d5aa0" stroke="#fff" stroke-opacity=".55" stroke-width="1.600" paint-order="stroke" stroke-linejoin="round" transform="rotate(-27 424.5 126)" direction="rtl" >ولاية أريانة</text>
<text x="497" y="148.657" font-size="10.45" fill="#2a2a2a" stroke="#fff" stroke-opacity=".55" stroke-width="1.600" paint-order="stroke" stroke-linejoin="round" direction="rtl" >دار فضال</text>
<text x="531" y="182.273" font-size="9.35" fill="#7a7a7a" stroke="#fff" stroke-opacity=".55" stroke-width="1.600" paint-order="stroke" stroke-linejoin="round" direction="rtl" >العوينة</text>
<text x="528" y="201.963" font-size="12.75" fill="#2a2a2a" stroke="#fff" stroke-opacity=".55" stroke-width="1.600" paint-order="stroke" stroke-linejoin="round" direction="rtl" >العوينة</text>
<text x="543" y="219.157" font-size="10.45" fill="#2a2a2a" stroke="#fff" stroke-opacity=".55" stroke-width="1.600" paint-order="stroke" stroke-linejoin="round" direction="rtl" >ضفاف البحيرة</text>
<text x="543" y="232.657" font-size="10.45" fill="#2a2a2a" stroke="#fff" stroke-opacity=".55" stroke-width="1.600" paint-order="stroke" stroke-linejoin="round" direction="rtl" >2</text>
<text x="422" y="217.465" font-size="9.9" fill="#6655c4" stroke="#fff" stroke-opacity=".55" stroke-width="1.600" paint-order="stroke" stroke-linejoin="round" direction="rtl" >مطار تونس</text>
<text x="422" y="229.465" font-size="9.9" fill="#6655c4" stroke="#fff" stroke-opacity=".55" stroke-width="1.600" paint-order="stroke" stroke-linejoin="round" direction="rtl" >قرطاج الدولي</text>
<text x="576" y="261.428" font-size="12.65" fill="#8d5aa0" stroke="#fff" stroke-opacity=".55" stroke-width="1.600" paint-order="stroke" stroke-linejoin="round" direction="rtl" >معتمدية حلق</text>
<text x="577" y="276.928" font-size="12.65" fill="#8d5aa0" stroke="#fff" stroke-opacity=".55" stroke-width="1.600" paint-order="stroke" stroke-linejoin="round" direction="rtl" >الوادي</text>
<text x="296" y="231.465" font-size="9.9" fill="#2a2a2a" stroke="#fff" stroke-opacity=".55" stroke-width="1.600" paint-order="stroke" stroke-linejoin="round" direction="rtl" >ـه 1</text>
<text x="321" y="261.658" font-size="10.45" fill="#2a2a2a" stroke="#fff" stroke-opacity=".55" stroke-width="1.600" paint-order="stroke" stroke-linejoin="round" direction="rtl" >الحي الأولمبي</text>
<text x="252" y="272.465" font-size="9.9" fill="#2a2a2a" stroke="#fff" stroke-opacity=".55" stroke-width="1.600" paint-order="stroke" stroke-linejoin="round" direction="rtl" >موتوالفيل</text>
<text x="328" y="282.658" font-size="10.45" fill="#2a2a2a" stroke="#fff" stroke-opacity=".55" stroke-width="1.600" paint-order="stroke" stroke-linejoin="round" direction="rtl" >حي الخضراء</text>
<text x="291" y="303.158" font-size="10.45" fill="#2a2a2a" stroke="#fff" stroke-opacity=".55" stroke-width="1.600" paint-order="stroke" stroke-linejoin="round" direction="rtl" >الحدائق</text>
<text x="449.5" y="264.658" font-size="10.45" fill="#2a2a2a" stroke="#fff" stroke-opacity=".55" stroke-width="1.600" paint-order="stroke" stroke-linejoin="round" direction="rtl" >ضفاف البحيرة</text>
<text x="428" y="307.85" font-size="11" fill="#8d5aa0" stroke="#fff" stroke-opacity=".55" stroke-width="1.600" paint-order="stroke" stroke-linejoin="round" direction="rtl" >البحيرة</text>
<text x="523" y="316.158" font-size="10.45" fill="#5d7fb8" stroke="#fff" stroke-opacity=".55" stroke-width="1.600" paint-order="stroke" stroke-linejoin="round" direction="rtl" >بحيرة تونس</text>
<text x="297" y="330.658" font-size="10.45" fill="#2a2a2a" stroke="#fff" stroke-opacity=".55" stroke-width="1.600" paint-order="stroke" stroke-linejoin="round" direction="rtl" >مونبليزير</text>
<text x="246" y="351.641" font-size="13.26" fill="#2a2a2a" stroke="#fff" stroke-opacity=".55" stroke-width="1.600" paint-order="stroke" stroke-linejoin="round" direction="rtl" >باب العسل</text>
<text x="243" y="373.043" font-size="11.55" fill="#2a2a2a" stroke="#fff" stroke-opacity=".55" stroke-width="1.600" paint-order="stroke" stroke-linejoin="round" direction="rtl" >باب سويقة</text>
<text x="295" y="394.534" font-size="15.81" fill="#2a2a2a" stroke="#fff" stroke-opacity=".55" stroke-width="1.600" paint-order="stroke" stroke-linejoin="round" direction="rtl" >تونس</text>
<text x="274.5" y="421.543" font-size="11.55" fill="#2a2a2a" stroke="#fff" stroke-opacity=".55" stroke-width="1.600" paint-order="stroke" stroke-linejoin="round" direction="rtl" >سيدي البشير</text>
<text x="257" y="458.658" font-size="10.45" fill="#2a2a2a" stroke="#fff" stroke-opacity=".55" stroke-width="1.600" paint-order="stroke" stroke-linejoin="round" direction="rtl" >السيدة المنوبية</text>
<text x="214.5" y="395.658" font-size="10.45" fill="#2a2a2a" stroke="#fff" stroke-opacity=".55" stroke-width="1.600" paint-order="stroke" stroke-linejoin="round" direction="rtl" >برج فليفل</text>
<text x="174" y="370.658" font-size="10.45" fill="#2a2a2a" stroke="#fff" stroke-opacity=".55" stroke-width="1.600" paint-order="stroke" stroke-linejoin="round" direction="rtl" >بوشوشة</text>
<text x="151" y="343.462" font-size="12.75" fill="#2a2a2a" stroke="#fff" stroke-opacity=".55" stroke-width="1.600" paint-order="stroke" stroke-linejoin="round" direction="rtl" >باردو</text>
<text x="156" y="291.658" font-size="10.45" fill="#2a2a2a" stroke="#fff" stroke-opacity=".55" stroke-width="1.600" paint-order="stroke" stroke-linejoin="round" direction="rtl" >حي ابن خلدون</text>
<text x="144" y="308.658" font-size="10.45" fill="#2a2a2a" stroke="#fff" stroke-opacity=".55" stroke-width="1.600" paint-order="stroke" stroke-linejoin="round" direction="rtl" >حي التحرير</text>
<text x="222.5" y="314.658" font-size="10.45" fill="#2a2a2a" stroke="#fff" stroke-opacity=".55" stroke-width="1.600" paint-order="stroke" stroke-linejoin="round" direction="rtl" >الجبل الأحمر</text>
<text x="34" y="307.284" font-size="12.24" fill="#2a2a2a" stroke="#fff" stroke-opacity=".55" stroke-width="1.600" paint-order="stroke" stroke-linejoin="round" direction="rtl" >دوار هيشر</text>
<text x="30" y="351.784" font-size="12.24" fill="#2a2a2a" stroke="#fff" stroke-opacity=".55" stroke-width="1.600" paint-order="stroke" stroke-linejoin="round" direction="rtl" >منوبة</text>
<text x="146" y="392.658" font-size="10.45" fill="#2a2a2a" stroke="#fff" stroke-opacity=".55" stroke-width="1.600" paint-order="stroke" stroke-linejoin="round" direction="rtl" >الزهور 3</text>
<text x="167.5" y="418.35" font-size="11" fill="#2a2a2a" stroke="#fff" stroke-opacity=".55" stroke-width="1.600" paint-order="stroke" stroke-linejoin="round" direction="rtl" >حي الطيران</text>
<text x="61" y="439.465" font-size="9.9" fill="#2a2a2a" stroke="#fff" stroke-opacity=".55" stroke-width="1.600" paint-order="stroke" stroke-linejoin="round" direction="rtl" >الحرايرية</text>
<text x="19" y="399.272" font-size="9.35" fill="#8d5aa0" stroke="#fff" stroke-opacity=".55" stroke-width="1.600" paint-order="stroke" stroke-linejoin="round" transform="rotate(-38 19 396)" direction="rtl" >ولاية تونس</text>
<text x="75" y="499.284" font-size="12.24" fill="#2a2a2a" stroke="#fff" stroke-opacity=".55" stroke-width="1.600" paint-order="stroke" stroke-linejoin="round" direction="rtl" >سيدي حسين</text>
<text x="442" y="418.965" font-size="9.9" fill="#5d7fb8" stroke="#fff" stroke-opacity=".55" stroke-width="1.600" paint-order="stroke" stroke-linejoin="round" direction="rtl" >بحيرة مقرين</text>
<text x="358" y="445.772" font-size="9.35" fill="#8d5aa0" stroke="#fff" stroke-opacity=".55" stroke-width="1.600" paint-order="stroke" stroke-linejoin="round" transform="rotate(-62 358 442.5)" direction="rtl" >ولاية تونس</text>
<text x="571" y="480.428" font-size="12.65" fill="#8d5aa0" stroke="#fff" stroke-opacity=".55" stroke-width="1.600" paint-order="stroke" stroke-linejoin="round" direction="rtl" >معتمدية رادس</text>
<text x="619" y="8.85" font-size="11" fill="#2a2a2a" stroke="#fff" stroke-opacity=".55" stroke-width="1.600" paint-order="stroke" stroke-linejoin="round" direction="rtl" >ـت</text>
<text x="620" y="336.641" font-size="13.26" fill="#2a2a2a" stroke="#fff" stroke-opacity=".55" stroke-width="1.600" paint-order="stroke" stroke-linejoin="round" direction="rtl" >ـي</text>
<rect x="142.5" y="41.5" width="58.0" height="17.0" rx="2.500" fill="#f5c8d0" stroke="#d9899c" stroke-width="1"/>
<text x="171.5" y="53.5" font-size="9.500" fill="#7d2740" direction="rtl" unicode-bidi="embed">ط و RN 8</text>
<rect x="558.5" y="132.5" width="63.5" height="17.0" rx="2.500" fill="#fbe6cd" stroke="#d5ab78" stroke-width="1"/>
<text x="590.25" y="144.5" font-size="9.500" fill="#5f4215" direction="rtl" unicode-bidi="embed">ط و RN 10</text>
<rect x="359.5" y="373.5" width="57.0" height="16.0" rx="2.500" fill="#fbd5cb" stroke="#d9978a" stroke-width="1"/>
<text x="388" y="385" font-size="9.500" fill="#7a2a1a" direction="rtl" unicode-bidi="embed">طج RR 23</text>
<rect x="530.5" y="413.5" width="57.0" height="16.0" rx="2.500" fill="#f2f4d0" stroke="#b9bc80" stroke-width="1"/>
<text x="559" y="425" font-size="9.500" fill="#4f5418" direction="rtl" unicode-bidi="embed">طج RR 33</text>
<rect x="93.5" y="244.5" width="3" height="3" fill="#7a86c0"/>
<rect x="95.5" y="256.5" width="3" height="3" fill="#7a86c0"/>
<rect x="283.5" y="246.5" width="3" height="3" fill="#7a86c0"/>
<rect x="285.5" y="266.5" width="3" height="3" fill="#7a86c0"/>
<rect x="293.5" y="343.5" width="3" height="3" fill="#7a86c0"/>
<rect x="291.5" y="360.5" width="3" height="3" fill="#7a86c0"/>
<rect x="298.5" y="380.5" width="3" height="3" fill="#7a86c0"/>
<rect x="301.5" y="388.5" width="3" height="3" fill="#7a86c0"/>
<rect x="278.5" y="438.5" width="3" height="3" fill="#7a86c0"/>
<rect x="281.5" y="402.5" width="3" height="3" fill="#7a86c0"/>
<rect x="46.5" y="327.5" width="3" height="3" fill="#7a86c0"/>
<rect x="16.5" y="366.5" width="3" height="3" fill="#7a86c0"/>
<rect x="41.5" y="377.5" width="3" height="3" fill="#7a86c0"/>
<rect x="50.5" y="378.5" width="3" height="3" fill="#7a86c0"/>
<rect x="75.5" y="378.5" width="3" height="3" fill="#7a86c0"/>
<rect x="90.5" y="376.5" width="3" height="3" fill="#7a86c0"/>
<rect x="106.5" y="372.5" width="3" height="3" fill="#7a86c0"/>
<rect x="120.5" y="365.5" width="3" height="3" fill="#7a86c0"/>
<rect x="145.5" y="359.5" width="3" height="3" fill="#7a86c0"/>
<rect x="146.5" y="292.5" width="3" height="3" fill="#7a86c0"/>
<rect x="143.5" y="274.5" width="3" height="3" fill="#7a86c0"/>
<rect x="174.5" y="292.5" width="3" height="3" fill="#7a86c0"/>
<rect x="192.5" y="299.5" width="3" height="3" fill="#7a86c0"/>
<rect x="207.5" y="338.5" width="3" height="3" fill="#7a86c0"/>
<rect x="187.5" y="384.5" width="3" height="3" fill="#7a86c0"/>
<rect x="168.5" y="356.5" width="3" height="3" fill="#7a86c0"/>
<rect x="185.5" y="350.5" width="3" height="3" fill="#7a86c0"/>
<rect x="113.5" y="274.5" width="3" height="3" fill="#7a86c0"/>
<rect x="276.5" y="476.5" width="3" height="3" fill="#7a86c0"/>
<rect x="316.5" y="443.5" width="3" height="3" fill="#7a86c0"/>
<rect x="590.5" y="368.5" width="3" height="3" fill="#7a86c0"/>
</svg>
<svg class="abs" style="left:299px;top:209px" width="26" height="42" viewBox="0 0 26 42"><defs><linearGradient id="mk" x1="0" y1="0" x2="0" y2="1"><stop offset="0" stop-color="#3a93cf"/><stop offset="1" stop-color="#2172b0"/></linearGradient></defs><path d="M13 41C13 41 1 22 1 13A12 12 0 0 1 25 13C25 22 13 41 13 41z" fill="url(#mk)" stroke="#1d639a" stroke-width="1"/><circle cx="13" cy="12.500" r="4.500" fill="#fff"/></svg>
<svg class="abs" style="left:311px;top:226px" width="34" height="26" viewBox="0 0 34 26"><path d="M1 25L18 4c4-4 12-3 14 1 1 4-8 9-31 20z" fill="#000" opacity=".09"/></svg>
<div class="abs" style="left:141px;top:144px;width:341px;height:60px;background:#fff;border-radius:12px;box-shadow:0 3px 14px rgba(0,0,0,.4)"></div>
<svg class="abs" style="left:292px;top:204px" width="40" height="13" viewBox="0 0 40 13"><path d="M8 0h24L20 12z" fill="#fff"/></svg>
<div class="abs" style="left:161px;top:158px;width:301px;font-family:'Liberation Sans','DejaVu Sans',sans-serif;font-size:12px;line-height:16.800px;color:#333;white-space:nowrap">You are within 2056.5 meters from : <span class="ar" style="font-size:12px">نهج عين مريم,&rlm;<br>&rlm;الخضراء, تونس</span></div>
<div class="abs" style="left:464px;top:145px;width:14px;text-align:center;font-size:16px;line-height:18px;color:#c3c3c3;font-weight:bold;font-family:'DejaVu Sans',sans-serif">×</div>
<div class="abs" style="left:11px;top:11px;width:34px;height:64px;border:2px solid rgba(0,0,0,.2);border-radius:4px;background:#fff;background-clip:padding-box"><div style="height:30px;border-bottom:1px solid #ccc;text-align:center;font:bold 22px/30px 'Liberation Mono','DejaVu Sans Mono',monospace;color:#000;position:relative"><span style="position:relative;top:2.500px">+</span></div><div style="height:30px;text-align:center;font:bold 24px/28px 'Liberation Mono','DejaVu Sans Mono',monospace;color:#000"><span style="position:relative;top:2.500px">−</span></div></div>
<div class="abs" style="left:11px;top:85px;width:34px;height:34px;border:2px solid rgba(0,0,0,.2);border-radius:4px;background:#fff;background-clip:padding-box"><svg style="position:absolute;left:6px;top:5px" width="20" height="20" viewBox="0 0 20 20"><circle cx="7.700" cy="7.700" r="4.700" fill="#fff" stroke="#2b2b2b" stroke-width="1.900"/><path d="M11.200 11.300L16.300 17" stroke="#2b2b2b" stroke-width="2.800" stroke-linecap="round"/></svg></div>
</div>
<div class="abs" style="right:0;bottom:0;height:16px;padding:0 5px;background:rgba(255,255,255,.72);font-family:'Liberation Sans',sans-serif;font-size:11px;line-height:16px;color:#333;white-space:nowrap"><span style="color:#0078a8">Leaflet</span> | Powered by <span style="color:#0078a8">Esri</span> | <span style="color:#0078a8">Smart e-Tech © OpenStreetMap</span> Contributors ♥</div>
</div>
</body>
</html>
